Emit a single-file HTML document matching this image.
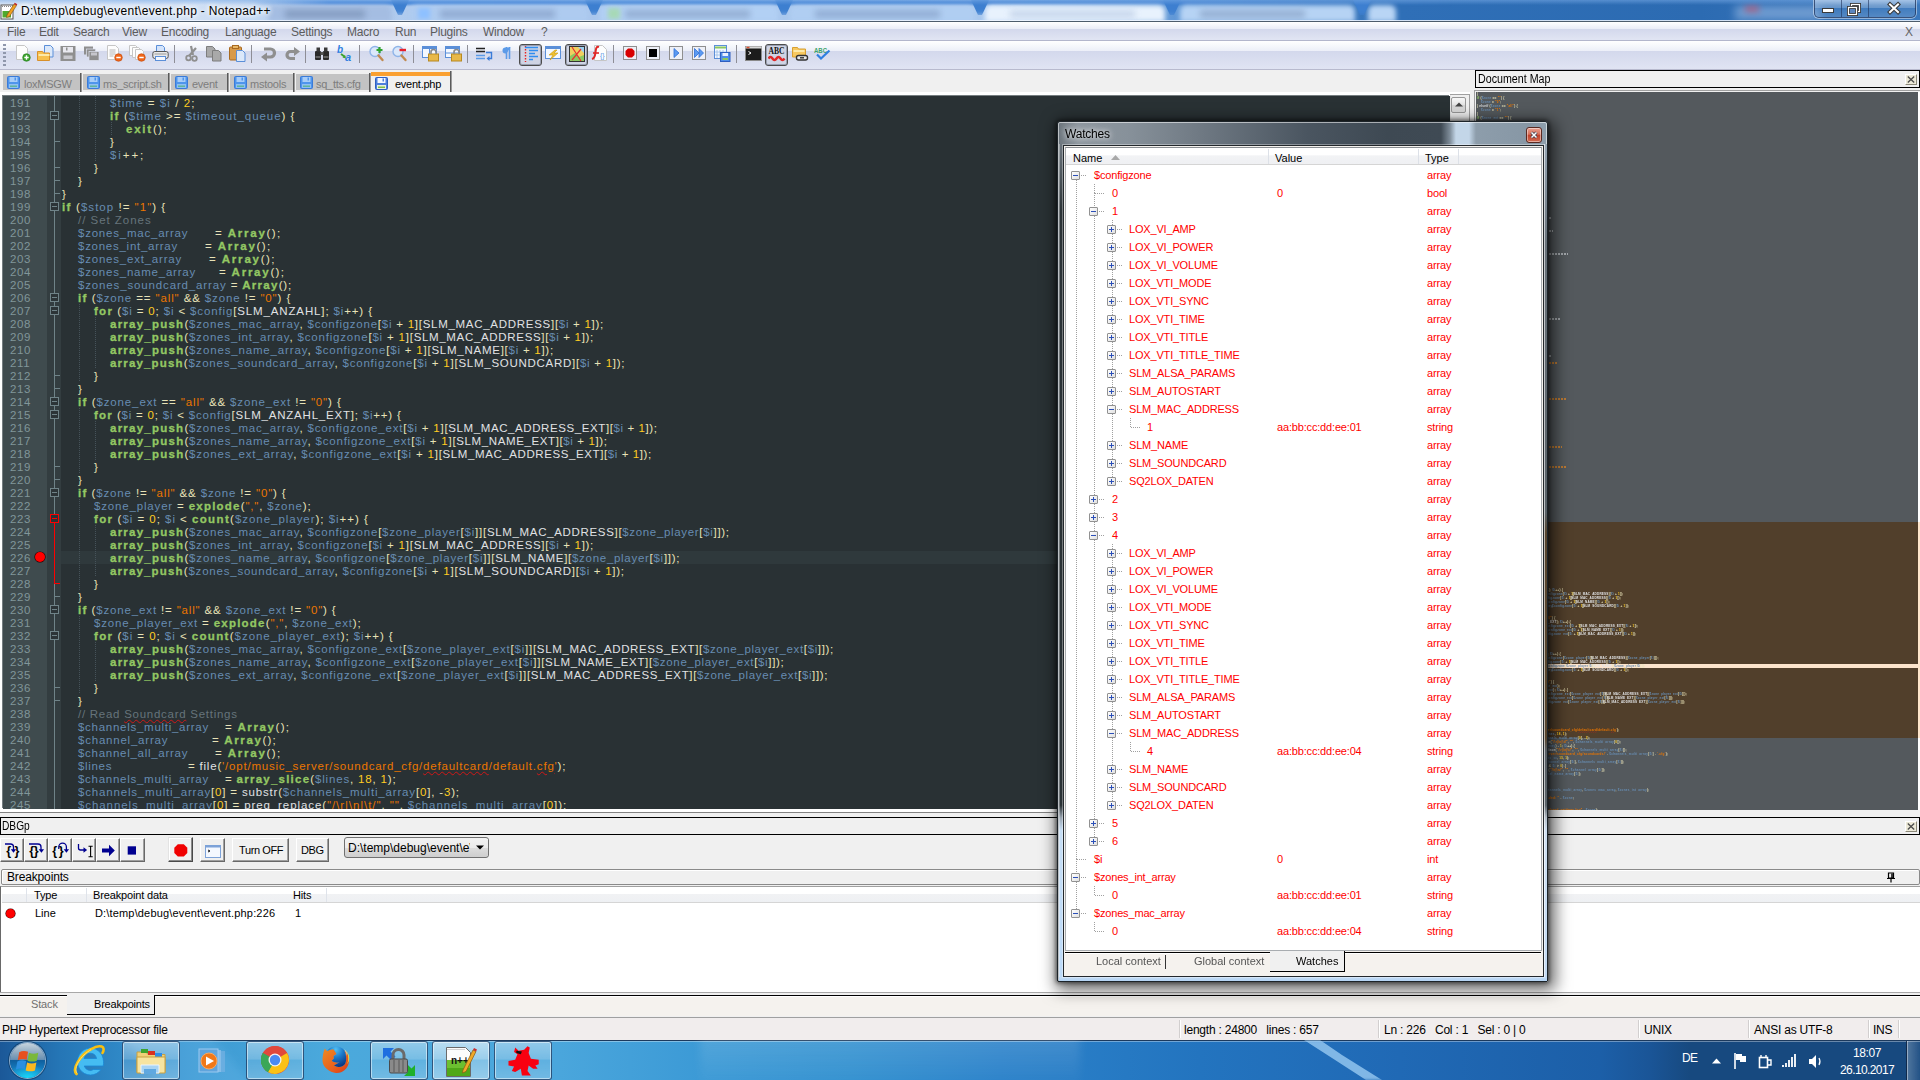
<!DOCTYPE html>
<html><head><meta charset="utf-8"><title>Notepad++</title>
<style>

*{box-sizing:border-box;margin:0;padding:0}
html,body{width:1920px;height:1080px;overflow:hidden;background:#f0f0f0}
body{font-family:"Liberation Sans",sans-serif;font-size:11px;color:#000}
#root{position:relative;width:1920px;height:1080px;overflow:hidden;background:#f0f0f0}
.abs{position:absolute}
.t{position:absolute;white-space:pre;line-height:1}

/* ---------- title bar ---------- */
#title{position:absolute;left:0;top:0;width:1920px;height:21px;overflow:hidden;
 background:linear-gradient(90deg,#dde8f7 0,#cfdff4 200px,#b5cff0 300px,#a9c6ec 560px,#a9c8ee 980px,#5f97d6 1180px,#2f6fb7 1400px,#2c6bb2 1700px,#3a78bd 1920px)}
#title .bl{position:absolute;filter:blur(2px)}
#title .ttl{position:absolute;left:21px;top:3px;font-size:12px;line-height:16px;color:#000;white-space:pre;letter-spacing:.3px;
 text-shadow:0 0 6px #fff,0 0 6px #fff,0 0 4px #fff}

/* ---------- menu ---------- */
#menu{position:absolute;left:0;top:22px;width:1920px;height:19px;border-bottom:1px solid #b3b6cc;
 background:linear-gradient(180deg,#ffffff 0,#e9ecf7 7px,#d3d8ec 7px,#e1e5f3 18px)}
#menu span{position:absolute;top:3px;font-size:12px;line-height:14px;color:#5c5c5c;white-space:pre;letter-spacing:-.25px}

/* ---------- toolbar ---------- */
#tbar{position:absolute;left:0;top:41px;width:1920px;height:29px;
 background:linear-gradient(180deg,#ffffff 0,#eceff8 10px,#d3d8ec 10px,#e0e4f3 28px)}
#tbar .sep{position:absolute;top:4px;width:1px;height:18px;background:#8e8e96}
#tbar svg{position:absolute}

/* ---------- tabs ---------- */
#tabs{position:absolute;left:0;top:70px;width:1470px;height:24px;background:#f0f0f0}
.tab{position:absolute;top:4px;height:16px;background:#c3c3c3;color:#7d7d7d;font-size:11px}
.tab b{position:absolute;font-weight:normal;top:4px;white-space:pre;line-height:12px;letter-spacing:-.25px}
.tabsep{position:absolute;top:3px;width:2px;height:19px;background:linear-gradient(90deg,#5a5a5a 0 1px,#9a9a9a 1px 2px)}
.tab.act{top:2px;height:21px;background:#f0f0f0;color:#000;border-top:4px solid #faa030}

/* ---------- editor ---------- */
#ed{position:absolute;left:0;top:93px;width:1470px;height:720px;background:#fff;border-bottom:1px solid #828282}
#edin{position:absolute;left:3px;top:3px;width:1447px;height:713px;background:#293134;overflow:hidden;box-shadow:-1px -1px 0 #757d80}
#lnm{position:absolute;left:0;top:0;width:44px;height:715px;background:#3f4b4e}
#fold{position:absolute;left:44px;top:0;width:14px;height:715px;background:#333d40}
.ln{position:absolute;left:7px;color:#81969a;font-size:11.5px;line-height:13px;letter-spacing:.6px;white-space:pre}
.cl{position:absolute;white-space:pre;font-size:11.5px;line-height:13px;color:#e0e2e4;height:13px;letter-spacing:var(--ls)}
.cl i{font-style:normal}
.v{color:#678cb1}.k{color:#93c763;font-weight:bold;letter-spacing:calc(var(--ls) + .4px);-webkit-text-stroke:.3px #93c763}.s{color:#ec7600}.n{color:#ffcd22}.o{color:#e8e2b7}.c{color:#66747b}.d{color:#e0e2e4}
.sq{text-decoration:underline wavy #d01818 1px;text-underline-offset:1px}

/* ---------- generic win classic ---------- */
.cap{position:absolute;background:#f0f0f0;border:1px solid #000;font-size:12px;line-height:14px;white-space:pre}
.xbtn{position:absolute;width:12px;height:11px;border:1px solid;border-color:#fff #8a8778 #8a8778 #fff;background:#ece9d8}
.btn{position:absolute;background:#f0f0f0;border:1px solid;border-color:#fff #696969 #696969 #fff;box-shadow:inset -1px -1px 0 #a0a0a0}

.tr{color:#f00;font-size:11px;letter-spacing:-.17px}
.mm{opacity:1;font-weight:bold}

.capt{display:inline-block;transform:scaleX(.89);transform-origin:0 50%;font-size:12px}
</style></head>
<body>
<div id="root">
<div id="title">
<div class="abs" style="left:250px;top:0;width:1200px;height:5px;background:linear-gradient(90deg,rgba(62,126,205,0),#4486da 80px,#3f80d2 900px,#2f6fb7);filter:blur(1.200px)"></div><div class="bl" style="left:268px;top:5px;width:124px;height:17px;background:#a4bde2;border-radius:6px 6px 0 0;filter:blur(2.500px)"></div><div class="bl" style="left:410px;top:5px;width:178px;height:17px;background:#aecbf0;border-radius:6px 6px 0 0;filter:blur(2.500px)"></div><div class="bl" style="left:600px;top:5px;width:178px;height:17px;background:#b2d0f4;border-radius:6px 6px 0 0;filter:blur(2.500px)"></div><div class="bl" style="left:790px;top:5px;width:185px;height:17px;background:#b0cef2;border-radius:6px 6px 0 0;filter:blur(2.500px)"></div><div class="bl" style="left:985px;top:5px;width:180px;height:17px;background:#e8f2fd;border-radius:6px 6px 0 0;filter:blur(2.500px)"></div><div class="bl" style="left:1180px;top:5px;width:175px;height:17px;background:#b6d3f4;border-radius:6px 6px 0 0;filter:blur(2.500px)"></div><div class="bl" style="left:1368px;top:5px;width:28px;height:17px;background:#b9d5f5;border-radius:6px 6px 0 0;filter:blur(2.500px)"></div><div class="bl" style="left:390px;top:-2px;width:20px;height:17px;background:#3d7fd0;clip-path:polygon(0 0,100% 0,60% 100%,40% 100%);filter:blur(2.500px)"></div><div class="bl" style="left:584px;top:-2px;width:20px;height:17px;background:#3d7fd0;clip-path:polygon(0 0,100% 0,60% 100%,40% 100%);filter:blur(2.500px)"></div><div class="bl" style="left:774px;top:-2px;width:20px;height:17px;background:#3d7fd0;clip-path:polygon(0 0,100% 0,60% 100%,40% 100%);filter:blur(2.500px)"></div><div class="bl" style="left:970px;top:-2px;width:20px;height:17px;background:#3d7fd0;clip-path:polygon(0 0,100% 0,60% 100%,40% 100%);filter:blur(2.500px)"></div><div class="bl" style="left:1162px;top:-2px;width:20px;height:17px;background:#3d7fd0;clip-path:polygon(0 0,100% 0,60% 100%,40% 100%);filter:blur(2.500px)"></div><div class="bl" style="left:1352px;top:-2px;width:20px;height:17px;background:#3d7fd0;clip-path:polygon(0 0,100% 0,60% 100%,40% 100%);filter:blur(2.500px)"></div><div class="bl" style="left:285px;top:10px;width:80px;height:8px;background:#7f97bb;filter:blur(3px);opacity:.85"></div><div class="bl" style="left:440px;top:10px;width:115px;height:8px;background:#8aa4cb;filter:blur(3px);opacity:.85"></div><div class="bl" style="left:625px;top:10px;width:125px;height:8px;background:#8ea8cd;filter:blur(3px);opacity:.85"></div><div class="bl" style="left:815px;top:10px;width:125px;height:8px;background:#8da8cf;filter:blur(3px);opacity:.85"></div><div class="bl" style="left:1010px;top:10px;width:125px;height:8px;background:#c3d3ea;filter:blur(3px);opacity:.85"></div><div class="bl" style="left:1200px;top:10px;width:105px;height:8px;background:#8fa9cd;filter:blur(3px);opacity:.85"></div><div class="bl" style="left:418px;top:8px;width:12px;height:11px;background:#8ec0ff;filter:blur(2px)"></div><div class="bl" style="left:608px;top:8px;width:12px;height:11px;background:#a7d9b6;filter:blur(2px)"></div><div class="bl" style="left:1735px;top:6px;width:85px;height:14px;background:#7fa7d8;filter:blur(4px);opacity:.8"></div><div class="bl" style="left:1745px;top:6px;width:14px;height:6px;background:#c0506a;filter:blur(3px);opacity:.7"></div><div class="abs" style="left:0;top:0;width:1920px;height:5px;background:linear-gradient(180deg,rgba(120,170,230,.55),rgba(120,170,230,0))"></div><svg class="abs" style="left:0;top:2px" width="18" height="18" viewBox="0 0 18 18"><rect x="1" y="3" width="12" height="14" fill="#fff" stroke="#555" stroke-width="1"/><rect x="2.5" y="9" width="8.5" height="6.5" fill="#4ea92c"/><path d="M2 4.5h10" stroke="#888" stroke-width="1" stroke-dasharray="1 1"/><path d="M7 13 L14 2 L16.5 3.5 L9.5 14.5 L6.5 15.5Z" fill="#f0a020" stroke="#7a4a10" stroke-width=".6"/><path d="M14 2 L16.5 3.5 L17.3 2.2 L14.8 .8Z" fill="#c02020"/></svg><span class="ttl">D:\temp\debug\event\event.php - Notepad++</span><div class="abs" style="left:1814px;top:0;width:102px;height:18px;border:1px solid rgba(30,50,90,.75);border-top:none;border-radius:0 0 5px 5px;box-shadow:0 0 0 1px rgba(255,255,255,.45);background:linear-gradient(180deg,rgba(255,255,255,.45) 0,rgba(255,255,255,.25) 45%,rgba(255,255,255,.05) 50%,rgba(255,255,255,.15) 100%)"></div><div class="abs" style="left:1841px;top:0;width:1px;height:17px;background:rgba(30,50,90,.6)"></div><div class="abs" style="left:1868px;top:0;width:1px;height:17px;background:rgba(30,50,90,.6)"></div><svg class="abs" style="left:1814px;top:0" width="102" height="18"><rect x="8.5" y="8.5" width="11" height="4" fill="#fff" stroke="#3a3a3a"/><rect x="37.500" y="4.5" width="8" height="7" fill="none" stroke="#3a3a3a" stroke-width="3"/><rect x="37.500" y="4.5" width="8" height="7" fill="none" stroke="#fff" stroke-width="1.2"/><rect x="34.500" y="7.500" width="8" height="7" fill="#5b86bf" stroke="#3a3a3a" stroke-width="3"/><rect x="34.500" y="7.500" width="8" height="7" fill="none" stroke="#fff" stroke-width="1.2"/><path d="M76 4.500 L84 12 M84 4.500 L76 12" stroke="#3a3a3a" stroke-width="4.200" stroke-linecap="square"/><path d="M76 4.500 L84 12 M84 4.500 L76 12" stroke="#fff" stroke-width="2" stroke-linecap="square"/></svg></div>
<div class="abs" style="left:0;top:20px;width:1920px;height:1px;background:rgba(240,246,255,.85)"></div><div class="abs" style="left:0;top:21px;width:1920px;height:1px;background:#4d5c6c"></div>
<div id="menu"><span style="left:7px">File</span><span style="left:39px">Edit</span><span style="left:73px">Search</span><span style="left:122px">View</span><span style="left:161px">Encoding</span><span style="left:225px">Language</span><span style="left:291px">Settings</span><span style="left:347px">Macro</span><span style="left:395px">Run</span><span style="left:430px">Plugins</span><span style="left:483px">Window</span><span style="left:541px">?</span><span style="left:1905px;color:#666">X</span></div>
<div id="tbar"><div class="abs" style="left:0;top:28px;width:1920px;height:1px;background:#b8bace"></div><div class="abs" style="left:3px;top:3px;width:3px;height:22px;background:repeating-linear-gradient(180deg,#8f97ab 0 2px,transparent 2px 4px)"></div><div class="sep" style="left:174px"></div><div class="sep" style="left:251px"></div><div class="sep" style="left:305px"></div><div class="sep" style="left:359px"></div><div class="sep" style="left:413px"></div><div class="sep" style="left:467px"></div><div class="sep" style="left:613px"></div><div class="sep" style="left:736px"></div><svg class="abs" style="left:15px;top:4px" width="16" height="17" viewBox="0 0 16 17"><path d="M1.500 .5h8l3 3v11h-11z" fill="#fdfdfd" stroke="#c6c6c6"/><circle cx="11.500" cy="12.500" r="3.800" fill="#3da32e" stroke="#1f7a18" stroke-width=".6"/><path d="M11.500 10.300v4.400M9.300 12.500h4.400" stroke="#fff" stroke-width="1.400"/></svg><svg class="abs" style="left:37px;top:4px" width="17" height="17" viewBox="0 0 17 17"><path d="M7.500 .5h6l2.500 2.500v9h-8.500z" fill="#dbe8fa" stroke="#5b8fd8"/><path d="M.5 6.500h5l1 1.500h6v7.500h-12z" fill="#f7c04e" stroke="#d8902a"/><path d="M1.500 10h11" stroke="#fde9a8" stroke-width="2"/></svg><svg class="abs" style="left:60px;top:4px" width="16" height="17" viewBox="0 0 16 17"><rect x=".5" y="1" width="15" height="15" fill="#8f8f8f"/><rect x="3" y="2" width="10" height="5.500" fill="#e9e9ef"/><rect x="6" y="2.500" width="1.500" height="3" fill="#8f8f8f"/><rect x="3.500" y="10.500" width="9" height="3.500" fill="#c9c9cf"/></svg><svg class="abs" style="left:84px;top:4px" width="16" height="17" viewBox="0 0 16 17"><rect x="0" y="1.500" width="9" height="8" fill="#8f8f8f"/><rect x="2.500" y="4" width="9" height="8" fill="#8f8f8f" stroke="#dfe3f0" stroke-width=".7"/><rect x="5" y="6.500" width="10" height="9" fill="#8f8f8f" stroke="#dfe3f0" stroke-width=".7"/><rect x="7" y="7.500" width="6" height="3" fill="#c6c6cc"/></svg><svg class="abs" style="left:107px;top:4px" width="16" height="17" viewBox="0 0 16 17"><path d="M.5 .5h8l3 3v11h-11z" fill="#fdfdfd" stroke="#c6c6c6"/><path d="M2.500 5h6M2.500 7h6M2.500 9h6M2.500 11h4" stroke="#b5b5b5"/><circle cx="11.500" cy="12.500" r="3.800" fill="#f0661a" stroke="#c04608" stroke-width=".6"/><path d="M9.300 12.500h4.400" stroke="#fff" stroke-width="1.500"/></svg><svg class="abs" style="left:129px;top:4px" width="17" height="17" viewBox="0 0 17 17"><path d="M.5 .5h6l2 2v8h-8z" fill="#fdfdfd" stroke="#c6c6c6"/><path d="M3.500 2.500h6l2 2v8h-8z" fill="#fdfdfd" stroke="#c6c6c6"/><path d="M6.500 4.500h6l2 2v8h-8z" fill="#fdfdfd" stroke="#c6c6c6"/><circle cx="12.500" cy="12.500" r="3.800" fill="#f0661a" stroke="#c04608" stroke-width=".6"/><path d="M10.300 12.500h4.400" stroke="#fff" stroke-width="1.500"/></svg><svg class="abs" style="left:152px;top:4px" width="17" height="17" viewBox="0 0 17 17"><path d="M4.500 .5h6l2 2v5h-8z" fill="#d4e4fb" stroke="#5b8fd8"/><rect x=".8" y="6.500" width="15.400" height="7" rx="2" fill="#e8e8e8" stroke="#555"/><rect x="3.500" y="11.500" width="10" height="4" fill="#f4f8ff" stroke="#5b8fd8"/><path d="M2.500 9h12" stroke="#9a9a9a"/></svg><svg class="abs" style="left:185px;top:4px" width="14" height="17" viewBox="0 0 14 17"><path d="M6 1 L8 10 M11 3 L4 11" stroke="#8f8f8f" stroke-width="2.200"/><circle cx="3.500" cy="13" r="2.300" fill="none" stroke="#8f8f8f" stroke-width="1.800"/><circle cx="9.500" cy="13.500" r="2.300" fill="none" stroke="#8f8f8f" stroke-width="1.800"/></svg><svg class="abs" style="left:206px;top:4px" width="17" height="17" viewBox="0 0 17 17"><path d="M.5 1.500h6l2.500 2.500v8h-8.500z" fill="#a9a9a9" stroke="#7d7d7d"/><path d="M6.500 5.500h6l2.500 2.500v8h-8.500z" fill="#a9a9a9" stroke="#7d7d7d"/></svg><svg class="abs" style="left:229px;top:4px" width="17" height="17" viewBox="0 0 17 17"><rect x=".5" y="2" width="12" height="13" rx="1" fill="#d89a4a" stroke="#a86a20"/><rect x="3.500" y=".5" width="6" height="3" fill="#e8b868" stroke="#a86a20"/><path d="M7.500 5.500h6l2.500 2.500v8.500h-8.500z" fill="#dbe8fa" stroke="#5b8fd8"/></svg><svg class="abs" style="left:261px;top:4px" width="16" height="17" viewBox="0 0 16 17"><path d="M3 4h6.500a4 4 0 0 1 0 8H6" fill="none" stroke="#8f8f8f" stroke-width="3.200"/><path d="M0 12l6-4.500v9z" fill="#8f8f8f"/></svg><svg class="abs" style="left:284px;top:4px" width="16" height="17" viewBox="0 0 16 17"><path d="M11 6.500H6.500a3.500 3.500 0 0 0 0 7H11" fill="none" stroke="#8f8f8f" stroke-width="3.200"/><path d="M16 6.500l-6-4.500v9z" fill="#8f8f8f"/></svg><svg class="abs" style="left:314px;top:4px" width="16" height="17" viewBox="0 0 16 17"><rect x="1" y="6" width="6" height="9" rx="1" fill="#2a2a2a"/><rect x="9" y="6" width="6" height="9" rx="1" fill="#2a2a2a"/><rect x="2.500" y="2.500" width="3.500" height="4" fill="#3a3a3a"/><rect x="10" y="2.500" width="3.500" height="4" fill="#3a3a3a"/><rect x="6.500" y="7" width="3" height="3" fill="#555"/><path d="M1.500 12h5M9.500 12h5" stroke="#9a9a9a"/></svg><svg class="abs" style="left:337px;top:4px" width="17" height="18" viewBox="0 0 17 18"><text x="0" y="8" font-family="Liberation Sans" font-size="10" font-weight="bold" font-style="italic" fill="#2f7fe0">b</text><text x="8" y="16" font-family="Liberation Sans" font-size="11" font-weight="bold" font-style="italic" fill="#2f7fe0">a</text><path d="M4 9l4 3" stroke="#3da32e" stroke-width="1.800"/><path d="M9 13.500l-1-3.500l-2.500 2.500z" fill="#3da32e"/></svg><svg class="abs" style="left:369px;top:4px" width="16" height="17" viewBox="0 0 16 17"><circle cx="6" cy="6.500" r="5" fill="#dbe8fa" stroke="#8fb4e8" stroke-width="1.400"/><path d="M9.500 10.500l4 4.500" stroke="#c08a50" stroke-width="2.400" stroke-linecap="round"/><path d="M10.500 2v6M7.500 5h6" stroke="#2fa32e" stroke-width="2.200"/></svg><svg class="abs" style="left:392px;top:4px" width="16" height="17" viewBox="0 0 16 17"><circle cx="6" cy="6.500" r="5" fill="#dbe8fa" stroke="#8fb4e8" stroke-width="1.400"/><path d="M9.500 10.500l4 4.500" stroke="#c08a50" stroke-width="2.400" stroke-linecap="round"/><path d="M7.500 5h6.500" stroke="#e8202a" stroke-width="2.400"/></svg><svg class="abs" style="left:422px;top:4px" width="17" height="17" viewBox="0 0 17 17"><rect x=".5" y="1.500" width="14" height="11" fill="#f4f8ff" stroke="#5b8fd8"/><path d="M.5 3h14" stroke="#5b8fd8" stroke-width="2"/><path d="M7.500 3v9.500" stroke="#5b8fd8"/><rect x="6.500" y="9" width="10" height="7" fill="#e8b848" stroke="#b88a20"/><path d="M9 9v-2a2.500 2.500 0 0 1 5 0v2" fill="none" stroke="#8a8a8a" stroke-width="1.600"/></svg><svg class="abs" style="left:445px;top:4px" width="17" height="17" viewBox="0 0 17 17"><rect x=".5" y="1.500" width="14" height="11" fill="#f4f8ff" stroke="#5b8fd8"/><path d="M.5 3h14" stroke="#5b8fd8" stroke-width="2"/><path d="M.5 8h14" stroke="#5b8fd8"/><rect x="6.500" y="9" width="10" height="7" fill="#e8b848" stroke="#b88a20"/><path d="M9 9v-2a2.500 2.500 0 0 1 5 0v2" fill="none" stroke="#8a8a8a" stroke-width="1.600"/></svg><svg class="abs" style="left:476px;top:4px" width="17" height="17" viewBox="0 0 17 17"><path d="M0 3.500h9M0 6.500h9" stroke="#222" stroke-width="1.400"/><path d="M0 10.500h9M0 13.500h9" stroke="#5b9ae8" stroke-width="1.400"/><path d="M10 7.500h5.500v6h-3" fill="none" stroke="#3a7bd8" stroke-width="1.400"/><path d="M13.500 11l-3 2.500l3 2.500z" fill="#3a7bd8"/></svg><svg class="abs" style="left:501px;top:4px" width="10" height="17" viewBox="0 0 10 17"><path d="M5.500 2v12M8.500 2v12" stroke="#5b9ae8" stroke-width="1.600"/><path d="M9.500 2.500H4.500a3 3 0 0 0 0 6h1z" fill="#5b9ae8"/></svg><div class="abs" style="left:519px;top:3px;width:23px;height:22px;border:1px solid #4c4c4c;border-radius:3px;background:#cfd4e4;box-shadow:inset 0 0 0 1px #9aa0b2"></div><svg class="abs" style="left:524px;top:5px" width="16" height="16" viewBox="0 0 16 16"><path d="M1.500 0v16" stroke="#e82020" stroke-width="1.400" stroke-dasharray="1.500 1.500"/><path d="M1 1.500h13M5 4.500h9M5 7.500h6M5 10.500h9M5 13.500h4" stroke="#2f8df0" stroke-width="1.600"/></svg><svg class="abs" style="left:545px;top:4px" width="16" height="17" viewBox="0 0 16 17"><rect x=".5" y="1.500" width="15" height="12" fill="#f4f8ff" stroke="#5b8fd8"/><path d="M.5 3h15" stroke="#5b8fd8" stroke-width="2"/><path d="M10 5l-6 5h4l-3 5l8-7h-4l3-3z" fill="#f0c030" stroke="#c89a18" stroke-width=".6"/></svg><div class="abs" style="left:565px;top:3px;width:23px;height:22px;border:1px solid #4c4c4c;border-radius:3px;background:#cfd4e4;box-shadow:inset 0 0 0 1px #9aa0b2"></div><svg class="abs" style="left:569px;top:5px" width="16" height="16" viewBox="0 0 16 16"><rect x=".5" y=".5" width="15" height="15" fill="#f0d060" stroke="#333"/><path d="M1 10l5-3l4 4l5-2v6h-14z" fill="#8cc860"/><path d="M9 1h6v6z" fill="#9ad0f0"/><path d="M3 1l9 14M12 3l-9 11" stroke="#e83030" stroke-width="1.200"/></svg><svg class="abs" style="left:591px;top:4px" width="17" height="18" viewBox="0 0 17 18"><path d="M3.500 .5h8l4 4v11h-12z" fill="#fdfdfd" stroke="#c6c6c6"/><path d="M8 2c-3-1-3 2-3.500 5s0 6-3.500 7" fill="none" stroke="#e02828" stroke-width="2"/><path d="M2 8h6" stroke="#e02828" stroke-width="1.600"/><text x="9" y="13" font-family="Liberation Sans" font-size="7" fill="#5b9ae8">{}</text></svg><svg class="abs" style="left:623px;top:5px" width="14" height="14" viewBox="0 0 14 14"><rect x=".5" y=".5" width="13" height="13" fill="#eef0f7" stroke="#8f8f8f"/><path d="M5 2.500h4l2.500 2.500v4L9 11.500H5L2.500 9V5z" fill="#d80000"/></svg><svg class="abs" style="left:646px;top:5px" width="14" height="14" viewBox="0 0 14 14"><rect x=".5" y=".5" width="13" height="13" fill="#eef0f7" stroke="#8f8f8f"/><rect x="3" y="3" width="8" height="8" fill="#000"/></svg><svg class="abs" style="left:669px;top:5px" width="14" height="14" viewBox="0 0 14 14"><rect x=".5" y=".5" width="13" height="13" fill="#eef0f7" stroke="#8f8f8f"/><path d="M5 2.500l5 4.500l-5 4.500z" fill="#5b9af0" stroke="#2f6fd8" stroke-width=".8"/></svg><svg class="abs" style="left:692px;top:5px" width="14" height="14" viewBox="0 0 14 14"><rect x=".5" y=".5" width="13" height="13" fill="#eef0f7" stroke="#8f8f8f"/><path d="M2.500 2.500l4.500 4.500l-4.500 4.500z M7 2.500l4.500 4.500l-4.500 4.500z" fill="#5b9af0" stroke="#2f6fd8" stroke-width=".8"/></svg><svg class="abs" style="left:714px;top:4px" width="17" height="17" viewBox="0 0 17 17"><rect x=".5" y=".5" width="12" height="13" fill="#f4f8ff" stroke="#5b8fd8"/><path d="M1 2.500h11" stroke="#8cc860" stroke-width="2"/><path d="M3 5v8M6 5v8M9 5v8M1 7h11M1 10h11" stroke="#9abce8" stroke-width=".8"/><rect x="6.500" y="7.500" width="9.500" height="9" fill="#4f8fe8" stroke="#2f5fc0"/><rect x="8.500" y="8" width="5.500" height="3" fill="#e8f0ff"/><rect x="8.500" y="13" width="5.500" height="2" fill="#8cc860"/></svg><svg class="abs" style="left:745px;top:5px" width="17" height="15" viewBox="0 0 17 15"><rect x=".5" y=".5" width="16" height="14" fill="#1c1c1c" stroke="#8a8a8a"/><path d="M.5 1.500h16" stroke="#d8d8d8" stroke-width="2"/><path d="M1.500 1.500h3" stroke="#e05030" stroke-width="1.400"/><path d="M3.500 5.500l2.500 1.500l-2.500 1.500" fill="none" stroke="#fff" stroke-width="1"/></svg><div class="abs" style="left:765px;top:3px;width:23px;height:22px;border:1px solid #4c4c4c;border-radius:3px;background:#cfd4e4;box-shadow:inset 0 0 0 1px #9aa0b2"></div><svg class="abs" style="left:768px;top:5px" width="18" height="16" viewBox="0 0 18 16"><text x=".5" y="8" font-family="Liberation Serif" font-size="9.500" font-weight="bold" fill="#111" textLength="16" lengthAdjust="spacingAndGlyphs">ABC</text><path d="M.5 12.500q2-3 4 0t4 0t4 0t4 0" fill="none" stroke="#e02828" stroke-width="2.400"/></svg><svg class="abs" style="left:792px;top:4px" width="17" height="17" viewBox="0 0 17 17"><path d="M.5 2.500h5l1 1.500h7v8h-13z" fill="#f7c860" stroke="#d8a030"/><path d="M1.500 6h11" stroke="#fde9a8" stroke-width="2"/><rect x="4.500" y="10.500" width="11" height="4.500" rx="2" fill="#e8e8e8" stroke="#333" stroke-width="1.400"/><path d="M8 12.800h4" stroke="#333" stroke-width="1.400"/></svg><svg class="abs" style="left:814px;top:4px" width="17" height="17" viewBox="0 0 17 17"><text x="0" y="7.500" font-family="Liberation Sans" font-size="8" font-weight="bold" fill="#3da36a" textLength="13" lengthAdjust="spacingAndGlyphs">ABC</text><path d="M3 9.500l4 4l8.500-8" fill="none" stroke="#2f7fe0" stroke-width="2.200"/></svg></div>
<div id="tabs"><div class="tab" style="left:3px;width:77px"><svg class="abs" style="left:4px;top:2px" width="13" height="13" viewBox="0 0 13 13"><rect x=".5" y=".5" width="12" height="12" rx="1" fill="#4f95ec" stroke="#3a7bd8"/><rect x="2.500" y="1" width="8" height="5" fill="#a8cdf8"/><rect x="7.500" y="1.500" width="1.500" height="3" fill="#4f95ec"/><rect x="2" y="8" width="9" height="4" fill="#8fc0f2"/><rect x="3" y="9.500" width="7" height="1.500" fill="#5fb49a"/></svg><b style="left:21px">loxMSGW</b></div><div class="tabsep" style="left:80px"></div><div class="tab" style="left:83px;width:85px"><svg class="abs" style="left:4px;top:2px" width="13" height="13" viewBox="0 0 13 13"><rect x=".5" y=".5" width="12" height="12" rx="1" fill="#4f95ec" stroke="#3a7bd8"/><rect x="2.500" y="1" width="8" height="5" fill="#a8cdf8"/><rect x="7.500" y="1.500" width="1.500" height="3" fill="#4f95ec"/><rect x="2" y="8" width="9" height="4" fill="#8fc0f2"/><rect x="3" y="9.500" width="7" height="1.500" fill="#5fb49a"/></svg><b style="left:20px">ms_script.sh</b></div><div class="tabsep" style="left:168px"></div><div class="tab" style="left:171px;width:56px"><svg class="abs" style="left:4px;top:2px" width="13" height="13" viewBox="0 0 13 13"><rect x=".5" y=".5" width="12" height="12" rx="1" fill="#4f95ec" stroke="#3a7bd8"/><rect x="2.500" y="1" width="8" height="5" fill="#a8cdf8"/><rect x="7.500" y="1.500" width="1.500" height="3" fill="#4f95ec"/><rect x="2" y="8" width="9" height="4" fill="#8fc0f2"/><rect x="3" y="9.500" width="7" height="1.500" fill="#5fb49a"/></svg><b style="left:21px">event</b></div><div class="tabsep" style="left:227px"></div><div class="tab" style="left:230px;width:63px"><svg class="abs" style="left:4px;top:2px" width="13" height="13" viewBox="0 0 13 13"><rect x=".5" y=".5" width="12" height="12" rx="1" fill="#4f95ec" stroke="#3a7bd8"/><rect x="2.500" y="1" width="8" height="5" fill="#a8cdf8"/><rect x="7.500" y="1.500" width="1.500" height="3" fill="#4f95ec"/><rect x="2" y="8" width="9" height="4" fill="#8fc0f2"/><rect x="3" y="9.500" width="7" height="1.500" fill="#5fb49a"/></svg><b style="left:20px">mstools</b></div><div class="tabsep" style="left:293px"></div><div class="tab" style="left:296px;width:73px"><svg class="abs" style="left:4px;top:2px" width="13" height="13" viewBox="0 0 13 13"><rect x=".5" y=".5" width="12" height="12" rx="1" fill="#4f95ec" stroke="#3a7bd8"/><rect x="2.500" y="1" width="8" height="5" fill="#a8cdf8"/><rect x="7.500" y="1.500" width="1.500" height="3" fill="#4f95ec"/><rect x="2" y="8" width="9" height="4" fill="#8fc0f2"/><rect x="3" y="9.500" width="7" height="1.500" fill="#5fb49a"/></svg><b style="left:20px">sq_tts.cfg</b></div><div class="tabsep" style="left:369px"></div><div class="tab act" style="left:371px;width:79px"><svg class="abs" style="left:4px;top:1px" width="13" height="13" viewBox="0 0 13 13"><rect x=".5" y=".5" width="12" height="12" rx="1" fill="#4d7fdc" stroke="#2f5fc0"/><rect x="2.500" y="1" width="8" height="5" fill="#f4f8ff"/><rect x="7.500" y="1.500" width="1.500" height="3" fill="#4d7fdc"/><rect x="2" y="8" width="9" height="4" fill="#e8f0e0"/><rect x="3" y="9.500" width="7" height="1.500" fill="#7cc04a"/></svg><b style="left:24px;top:2px">event.php</b></div><div class="tabsep" style="left:450px;top:1px;height:21px"></div><div class="abs" style="left:0;top:22px;width:1470px;height:1px;background:#fff"></div></div>
<div class="cap" style="left:1475px;top:70px;width:445px;height:18px;padding:1px 0 0 2px"><span class="capt">Document Map</span></div><div class="xbtn" style="left:1905px;top:74px"></div><svg class="abs" style="left:1907px;top:76px" width="8" height="7"><path d="M.8 .5 L7.200 6.500 M7.200 .5 L.8 6.500" stroke="#4a4a4a" stroke-width="1.300"/></svg><div id="ed"><div id="edin">
<div id="lnm"></div><div id="fold"></div>
<div class="abs" style="left:58px;top:455px;width:1390px;height:13px;background:#2f393c"></div>
<div class="abs" style="left:76px;top:0px;width:1px;height:78px;background:repeating-linear-gradient(180deg,#46535a 0 1px,transparent 1px 2px)"></div>
<div class="abs" style="left:76px;top:208px;width:1px;height:78px;background:repeating-linear-gradient(180deg,#46535a 0 1px,transparent 1px 2px)"></div>
<div class="abs" style="left:76px;top:312px;width:1px;height:65px;background:repeating-linear-gradient(180deg,#46535a 0 1px,transparent 1px 2px)"></div>
<div class="abs" style="left:76px;top:403px;width:1px;height:91px;background:repeating-linear-gradient(180deg,#46535a 0 1px,transparent 1px 2px)"></div>
<div class="abs" style="left:76px;top:520px;width:1px;height:78px;background:repeating-linear-gradient(180deg,#46535a 0 1px,transparent 1px 2px)"></div>
<div class="abs" style="left:92px;top:0px;width:1px;height:65px;background:repeating-linear-gradient(180deg,#46535a 0 1px,transparent 1px 2px)"></div>
<div class="abs" style="left:92px;top:221px;width:1px;height:52px;background:repeating-linear-gradient(180deg,#46535a 0 1px,transparent 1px 2px)"></div>
<div class="abs" style="left:92px;top:325px;width:1px;height:39px;background:repeating-linear-gradient(180deg,#46535a 0 1px,transparent 1px 2px)"></div>
<div class="abs" style="left:92px;top:429px;width:1px;height:52px;background:repeating-linear-gradient(180deg,#46535a 0 1px,transparent 1px 2px)"></div>
<div class="abs" style="left:92px;top:546px;width:1px;height:39px;background:repeating-linear-gradient(180deg,#46535a 0 1px,transparent 1px 2px)"></div>
<div class="abs" style="left:108px;top:26px;width:1px;height:13px;background:repeating-linear-gradient(180deg,#46535a 0 1px,transparent 1px 2px)"></div>
<div class="abs" style="left:51px;top:0px;width:1px;height:715px;background:#6f8388"></div><div class="abs" style="left:51px;top:45px;width:6px;height:1px;background:#6f8388"></div><div class="abs" style="left:51px;top:71px;width:6px;height:1px;background:#6f8388"></div><div class="abs" style="left:51px;top:84px;width:6px;height:1px;background:#6f8388"></div><div class="abs" style="left:51px;top:97px;width:6px;height:1px;background:#6f8388"></div><div class="abs" style="left:51px;top:279px;width:6px;height:1px;background:#6f8388"></div><div class="abs" style="left:51px;top:292px;width:6px;height:1px;background:#6f8388"></div><div class="abs" style="left:51px;top:370px;width:6px;height:1px;background:#6f8388"></div><div class="abs" style="left:51px;top:383px;width:6px;height:1px;background:#6f8388"></div><div class="abs" style="left:51px;top:500px;width:6px;height:1px;background:#6f8388"></div><div class="abs" style="left:51px;top:591px;width:6px;height:1px;background:#6f8388"></div><div class="abs" style="left:51px;top:604px;width:6px;height:1px;background:#6f8388"></div><div class="abs" style="left:51px;top:427px;width:1px;height:61px;background:#ff0000"></div><div class="abs" style="left:51px;top:487px;width:6px;height:1px;background:#ff0000"></div><div class="abs" style="left:47px;top:15px;width:9px;height:9px;border:1px solid #6f8388;background:#2c3437"></div><div class="abs" style="left:49px;top:19px;width:5px;height:1px;background:#6f8388"></div><div class="abs" style="left:47px;top:106px;width:9px;height:9px;border:1px solid #6f8388;background:#2c3437"></div><div class="abs" style="left:49px;top:110px;width:5px;height:1px;background:#6f8388"></div><div class="abs" style="left:47px;top:197px;width:9px;height:9px;border:1px solid #6f8388;background:#2c3437"></div><div class="abs" style="left:49px;top:201px;width:5px;height:1px;background:#6f8388"></div><div class="abs" style="left:47px;top:210px;width:9px;height:9px;border:1px solid #6f8388;background:#2c3437"></div><div class="abs" style="left:49px;top:214px;width:5px;height:1px;background:#6f8388"></div><div class="abs" style="left:47px;top:301px;width:9px;height:9px;border:1px solid #6f8388;background:#2c3437"></div><div class="abs" style="left:49px;top:305px;width:5px;height:1px;background:#6f8388"></div><div class="abs" style="left:47px;top:314px;width:9px;height:9px;border:1px solid #6f8388;background:#2c3437"></div><div class="abs" style="left:49px;top:318px;width:5px;height:1px;background:#6f8388"></div><div class="abs" style="left:47px;top:392px;width:9px;height:9px;border:1px solid #6f8388;background:#2c3437"></div><div class="abs" style="left:49px;top:396px;width:5px;height:1px;background:#6f8388"></div><div class="abs" style="left:47px;top:509px;width:9px;height:9px;border:1px solid #6f8388;background:#2c3437"></div><div class="abs" style="left:49px;top:513px;width:5px;height:1px;background:#6f8388"></div><div class="abs" style="left:47px;top:535px;width:9px;height:9px;border:1px solid #6f8388;background:#2c3437"></div><div class="abs" style="left:49px;top:539px;width:5px;height:1px;background:#6f8388"></div><div class="abs" style="left:47px;top:418px;width:9px;height:9px;border:1px solid #ff0000;background:#2c3437"></div><div class="abs" style="left:49px;top:422px;width:5px;height:1px;background:#ff0000"></div><div class="abs" style="left:32px;top:456px;width:10px;height:10px;border-radius:5px;background:#ff0000;box-shadow:0 0 0 .6px #200"></div>
<span class="ln" style="top:1px">191</span><span class="ln" style="top:14px">192</span><span class="ln" style="top:27px">193</span><span class="ln" style="top:40px">194</span><span class="ln" style="top:53px">195</span><span class="ln" style="top:66px">196</span><span class="ln" style="top:79px">197</span><span class="ln" style="top:92px">198</span><span class="ln" style="top:105px">199</span><span class="ln" style="top:118px">200</span><span class="ln" style="top:131px">201</span><span class="ln" style="top:144px">202</span><span class="ln" style="top:157px">203</span><span class="ln" style="top:170px">204</span><span class="ln" style="top:183px">205</span><span class="ln" style="top:196px">206</span><span class="ln" style="top:209px">207</span><span class="ln" style="top:222px">208</span><span class="ln" style="top:235px">209</span><span class="ln" style="top:248px">210</span><span class="ln" style="top:261px">211</span><span class="ln" style="top:274px">212</span><span class="ln" style="top:287px">213</span><span class="ln" style="top:300px">214</span><span class="ln" style="top:313px">215</span><span class="ln" style="top:326px">216</span><span class="ln" style="top:339px">217</span><span class="ln" style="top:352px">218</span><span class="ln" style="top:365px">219</span><span class="ln" style="top:378px">220</span><span class="ln" style="top:391px">221</span><span class="ln" style="top:404px">222</span><span class="ln" style="top:417px">223</span><span class="ln" style="top:430px">224</span><span class="ln" style="top:443px">225</span><span class="ln" style="top:456px">226</span><span class="ln" style="top:469px">227</span><span class="ln" style="top:482px">228</span><span class="ln" style="top:495px">229</span><span class="ln" style="top:508px">230</span><span class="ln" style="top:521px">231</span><span class="ln" style="top:534px">232</span><span class="ln" style="top:547px">233</span><span class="ln" style="top:560px">234</span><span class="ln" style="top:573px">235</span><span class="ln" style="top:586px">236</span><span class="ln" style="top:599px">237</span><span class="ln" style="top:612px">238</span><span class="ln" style="top:625px">239</span><span class="ln" style="top:638px">240</span><span class="ln" style="top:651px">241</span><span class="ln" style="top:664px">242</span><span class="ln" style="top:677px">243</span><span class="ln" style="top:690px">244</span><span class="ln" style="top:703px">245</span>
<span class="cl" id="c191_0" style="left:107.00px;top:1px;--ls:1.073px"><i class="v">$time</i> <i class="o">=</i> <i class="v">$i</i> <i class="o">/</i> <i class="n">2</i><i class="o">;</i></span>
<span class="cl" id="c192_0" style="left:107.00px;top:14px;--ls:0.973px"><i class="k">if</i> <i class="o">(</i><i class="v">$time</i> <i class="o">&gt;=</i> <i class="v">$timeout_queue</i><i class="o">)</i> <i class="o">{</i></span>
<span class="cl" id="c193_0" style="left:123.00px;top:27px;--ls:1.361px"><i class="k">exit</i><i class="o">();</i></span>
<span class="cl" id="c194_0" style="left:107.00px;top:40px;--ls:0.800px"><i class="o">}</i></span>
<span class="cl" id="c195_0" style="left:107.00px;top:53px;--ls:1.902px"><i class="v">$i</i><i class="o">++;</i></span>
<span class="cl" id="c196_0" style="left:91.00px;top:66px;--ls:0.800px"><i class="o">}</i></span>
<span class="cl" id="c197_0" style="left:75.00px;top:79px;--ls:0.800px"><i class="o">}</i></span>
<span class="cl" id="c198_0" style="left:59.00px;top:92px;--ls:0.800px"><i class="o">}</i></span>
<span class="cl" id="c199_0" style="left:59.00px;top:105px;--ls:1.022px"><i class="k">if</i> <i class="o">(</i><i class="v">$stop</i> <i class="o">!=</i> <i class="s">"1"</i><i class="o">)</i> <i class="o">{</i></span>
<span class="cl" id="c200_0" style="left:75.00px;top:118px;--ls:0.971px"><i class="c">// Set Zones</i></span><span class="cl" id="c201_0" style="left:75.00px;top:131px;--ls:0.776px"><i class="v">$zones_mac_array</i></span><span class="cl" id="c201_1" style="left:212.00px;top:131px;--ls:1.373px"><i class="o">=</i> <i class="k">Array</i><i class="o">();</i></span>
<span class="cl" id="c202_0" style="left:75.00px;top:144px;--ls:0.731px"><i class="v">$zones_int_array</i></span><span class="cl" id="c202_1" style="left:202.00px;top:144px;--ls:1.373px"><i class="o">=</i> <i class="k">Array</i><i class="o">();</i></span>
<span class="cl" id="c203_0" style="left:75.00px;top:157px;--ls:0.785px"><i class="v">$zones_ext_array</i></span><span class="cl" id="c203_1" style="left:206.00px;top:157px;--ls:1.401px"><i class="o">=</i> <i class="k">Array</i><i class="o">();</i></span>
<span class="cl" id="c204_0" style="left:75.00px;top:170px;--ls:0.772px"><i class="v">$zones_name_array</i></span><span class="cl" id="c204_1" style="left:216.00px;top:170px;--ls:1.345px"><i class="o">=</i> <i class="k">Array</i><i class="o">();</i></span>
<span class="cl" id="c205_0" style="left:75.00px;top:183px;--ls:0.855px"><i class="v">$zones_soundcard_array</i> <i class="o">=</i> <i class="k">Array</i><i class="o">();</i></span>
<span class="cl" id="c206_0" style="left:75.00px;top:196px;--ls:0.878px"><i class="k">if</i> <i class="o">(</i><i class="v">$zone</i> <i class="o">==</i> <i class="s">"all"</i> <i class="o">&amp;&amp;</i> <i class="v">$zone</i> <i class="o">!=</i> <i class="s">"0"</i><i class="o">)</i> <i class="o">{</i></span>
<span class="cl" id="c207_0" style="left:91.00px;top:209px;--ls:0.863px"><i class="k">for</i> <i class="o">(</i><i class="v">$i</i> <i class="o">=</i> <i class="n">0</i><i class="o">;</i> <i class="v">$i</i> <i class="o">&lt;</i> <i class="v">$config</i><i class="o">[</i>SLM_ANZAHL<i class="o">];</i> <i class="v">$i</i><i class="o">++)</i> <i class="o">{</i></span>
<span class="cl" id="c208_0" style="left:107.00px;top:222px;--ls:0.837px"><i class="k">array_push</i><i class="o">(</i><i class="v">$zones_mac_array</i><i class="o">,</i> </span><span class="cl" id="c208_1" style="left:304.50px;top:222px;--ls:0.754px"><i class="v">$configzone</i><i class="o">[</i><i class="v">$i</i> <i class="o">+</i> <i class="n">1</i><i class="o">]</i></span><span class="cl" id="c208_2" style="left:415.75px;top:222px;--ls:0.713px"><i class="o">[</i>SLM_MAC_ADDRESS<i class="o">][</i><i class="v">$i</i> <i class="o">+</i> <i class="n">1</i><i class="o">]);</i></span>
<span class="cl" id="c209_0" style="left:107.00px;top:235px;--ls:0.823px"><i class="k">array_push</i><i class="o">(</i><i class="v">$zones_int_array</i><i class="o">,</i> </span><span class="cl" id="c209_1" style="left:294.50px;top:235px;--ls:0.807px"><i class="v">$configzone</i><i class="o">[</i><i class="v">$i</i> <i class="o">+</i> <i class="n">1</i><i class="o">]</i></span><span class="cl" id="c209_2" style="left:406.75px;top:235px;--ls:0.675px"><i class="o">[</i>SLM_MAC_ADDRESS<i class="o">][</i><i class="v">$i</i> <i class="o">+</i> <i class="n">1</i><i class="o">]);</i></span>
<span class="cl" id="c210_0" style="left:107.00px;top:248px;--ls:0.841px"><i class="k">array_push</i><i class="o">(</i><i class="v">$zones_name_array</i><i class="o">,</i> </span><span class="cl" id="c210_1" style="left:312.50px;top:248px;--ls:0.794px"><i class="v">$configzone</i><i class="o">[</i><i class="v">$i</i> <i class="o">+</i> <i class="n">1</i><i class="o">]</i></span><span class="cl" id="c210_2" style="left:424.50px;top:248px;--ls:0.742px"><i class="o">[</i>SLM_NAME<i class="o">][</i><i class="v">$i</i> <i class="o">+</i> <i class="n">1</i><i class="o">]);</i></span>
<span class="cl" id="c211_0" style="left:107.00px;top:261px;--ls:0.780px"><i class="k">array_push</i><i class="o">(</i><i class="v">$zones_soundcard_array</i><i class="o">,</i> </span><span class="cl" id="c211_1" style="left:339.50px;top:261px;--ls:0.794px"><i class="v">$configzone</i><i class="o">[</i><i class="v">$i</i> <i class="o">+</i> <i class="n">1</i><i class="o">]</i></span><span class="cl" id="c211_2" style="left:451.50px;top:261px;--ls:0.728px"><i class="o">[</i>SLM_SOUNDCARD<i class="o">][</i><i class="v">$i</i> <i class="o">+</i> <i class="n">1</i><i class="o">]);</i></span>
<span class="cl" id="c212_0" style="left:91.00px;top:274px;--ls:0.800px"><i class="o">}</i></span>
<span class="cl" id="c213_0" style="left:75.00px;top:287px;--ls:0.800px"><i class="o">}</i></span>
<span class="cl" id="c214_0" style="left:75.00px;top:300px;--ls:0.878px"><i class="k">if</i> <i class="o">(</i><i class="v">$zone_ext</i> <i class="o">==</i> <i class="s">"all"</i> <i class="o">&amp;&amp;</i> <i class="v">$zone_ext</i> <i class="o">!=</i> <i class="s">"0"</i><i class="o">)</i> <i class="o">{</i></span>
<span class="cl" id="c215_0" style="left:91.00px;top:313px;--ls:0.792px"><i class="k">for</i> <i class="o">(</i><i class="v">$i</i> <i class="o">=</i> <i class="n">0</i><i class="o">;</i> <i class="v">$i</i> <i class="o">&lt;</i> <i class="v">$config</i><i class="o">[</i>SLM_ANZAHL_EXT<i class="o">];</i> <i class="v">$i</i><i class="o">++)</i> <i class="o">{</i></span>
<span class="cl" id="c216_0" style="left:107.00px;top:326px;--ls:0.837px"><i class="k">array_push</i><i class="o">(</i><i class="v">$zones_mac_array</i><i class="o">,</i> </span><span class="cl" id="c216_1" style="left:304.50px;top:326px;--ls:0.798px"><i class="v">$configzone_ext</i><i class="o">[</i><i class="v">$i</i> <i class="o">+</i> <i class="n">1</i><i class="o">]</i></span><span class="cl" id="c216_2" style="left:441.50px;top:326px;--ls:0.593px"><i class="o">[</i>SLM_MAC_ADDRESS_EXT<i class="o">][</i><i class="v">$i</i> <i class="o">+</i> <i class="n">1</i><i class="o">]);</i></span>
<span class="cl" id="c217_0" style="left:107.00px;top:339px;--ls:0.841px"><i class="k">array_push</i><i class="o">(</i><i class="v">$zones_name_array</i><i class="o">,</i> </span><span class="cl" id="c217_1" style="left:312.50px;top:339px;--ls:0.798px"><i class="v">$configzone_ext</i><i class="o">[</i><i class="v">$i</i> <i class="o">+</i> <i class="n">1</i><i class="o">]</i></span><span class="cl" id="c217_2" style="left:449.50px;top:339px;--ls:0.613px"><i class="o">[</i>SLM_NAME_EXT<i class="o">][</i><i class="v">$i</i> <i class="o">+</i> <i class="n">1</i><i class="o">]);</i></span>
<span class="cl" id="c218_0" style="left:107.00px;top:352px;--ls:0.842px"><i class="k">array_push</i><i class="o">(</i><i class="v">$zones_ext_array</i><i class="o">,</i> </span><span class="cl" id="c218_1" style="left:298.25px;top:352px;--ls:0.819px"><i class="v">$configzone_ext</i><i class="o">[</i><i class="v">$i</i> <i class="o">+</i> <i class="n">1</i><i class="o">]</i></span><span class="cl" id="c218_2" style="left:435.75px;top:352px;--ls:0.593px"><i class="o">[</i>SLM_MAC_ADDRESS_EXT<i class="o">][</i><i class="v">$i</i> <i class="o">+</i> <i class="n">1</i><i class="o">]);</i></span>
<span class="cl" id="c219_0" style="left:91.00px;top:365px;--ls:0.800px"><i class="o">}</i></span>
<span class="cl" id="c220_0" style="left:75.00px;top:378px;--ls:0.800px"><i class="o">}</i></span>
<span class="cl" id="c221_0" style="left:75.00px;top:391px;--ls:0.850px"><i class="k">if</i> <i class="o">(</i><i class="v">$zone</i> <i class="o">!=</i> <i class="s">"all"</i> <i class="o">&amp;&amp;</i> <i class="v">$zone</i> <i class="o">!=</i> <i class="s">"0"</i><i class="o">)</i> <i class="o">{</i></span>
<span class="cl" id="c222_0" style="left:91.00px;top:404px;--ls:0.831px"><i class="v">$zone_player</i> <i class="o">=</i> <i class="k">explode</i><i class="o">(</i><i class="s">","</i><i class="o">,</i> <i class="v">$zone</i><i class="o">);</i></span>
<span class="cl" id="c223_0" style="left:91.00px;top:417px;--ls:0.965px"><i class="k">for</i> <i class="o">(</i><i class="v">$i</i> <i class="o">=</i> <i class="n">0</i><i class="o">;</i> <i class="v">$i</i> <i class="o">&lt;</i> <i class="k">count</i><i class="o">(</i><i class="v">$zone_player</i><i class="o">);</i> <i class="v">$i</i><i class="o">++)</i> <i class="o">{</i></span>
<span class="cl" id="c224_0" style="left:107.00px;top:430px;--ls:0.837px"><i class="k">array_push</i><i class="o">(</i><i class="v">$zones_mac_array</i><i class="o">,</i> </span><span class="cl" id="c224_1" style="left:304.50px;top:430px;--ls:0.781px"><i class="v">$configzone</i><i class="o">[</i><i class="v">$zone_player</i><i class="o">[</i><i class="v">$i</i><i class="o">]]</i></span><span class="cl" id="c224_2" style="left:480.00px;top:430px;--ls:0.670px"><i class="o">[</i>SLM_MAC_ADDRESS<i class="o">][</i><i class="v">$zone_player</i><i class="o">[</i><i class="v">$i</i><i class="o">]]);</i></span>
<span class="cl" id="c225_0" style="left:107.00px;top:443px;--ls:0.823px"><i class="k">array_push</i><i class="o">(</i><i class="v">$zones_int_array</i><i class="o">,</i> </span><span class="cl" id="c225_1" style="left:294.50px;top:443px;--ls:0.807px"><i class="v">$configzone</i><i class="o">[</i><i class="v">$i</i> <i class="o">+</i> <i class="n">1</i><i class="o">]</i></span><span class="cl" id="c225_2" style="left:406.75px;top:443px;--ls:0.675px"><i class="o">[</i>SLM_MAC_ADDRESS<i class="o">][</i><i class="v">$i</i> <i class="o">+</i> <i class="n">1</i><i class="o">]);</i></span>
<span class="cl" id="c226_0" style="left:107.00px;top:456px;--ls:0.841px"><i class="k">array_push</i><i class="o">(</i><i class="v">$zones_name_array</i><i class="o">,</i> </span><span class="cl" id="c226_1" style="left:312.50px;top:456px;--ls:0.790px"><i class="v">$configzone</i><i class="o">[</i><i class="v">$zone_player</i><i class="o">[</i><i class="v">$i</i><i class="o">]]</i></span><span class="cl" id="c226_2" style="left:488.25px;top:456px;--ls:0.713px"><i class="o">[</i>SLM_NAME<i class="o">][</i><i class="v">$zone_player</i><i class="o">[</i><i class="v">$i</i><i class="o">]]);</i></span>
<span class="cl" id="c227_0" style="left:107.00px;top:469px;--ls:0.780px"><i class="k">array_push</i><i class="o">(</i><i class="v">$zones_soundcard_array</i><i class="o">,</i> </span><span class="cl" id="c227_1" style="left:339.50px;top:469px;--ls:0.794px"><i class="v">$configzone</i><i class="o">[</i><i class="v">$i</i> <i class="o">+</i> <i class="n">1</i><i class="o">]</i></span><span class="cl" id="c227_2" style="left:451.50px;top:469px;--ls:0.707px"><i class="o">[</i>SLM_SOUNDCARD<i class="o">][</i><i class="v">$i</i> <i class="o">+</i> <i class="n">1</i><i class="o">]);</i></span>
<span class="cl" id="c228_0" style="left:91.00px;top:482px;--ls:0.800px"><i class="o">}</i></span>
<span class="cl" id="c229_0" style="left:75.00px;top:495px;--ls:0.800px"><i class="o">}</i></span>
<span class="cl" id="c230_0" style="left:75.00px;top:508px;--ls:0.844px"><i class="k">if</i> <i class="o">(</i><i class="v">$zone_ext</i> <i class="o">!=</i> <i class="s">"all"</i> <i class="o">&amp;&amp;</i> <i class="v">$zone_ext</i> <i class="o">!=</i> <i class="s">"0"</i><i class="o">)</i> <i class="o">{</i></span>
<span class="cl" id="c231_0" style="left:91.00px;top:521px;--ls:0.828px"><i class="v">$zone_player_ext</i> <i class="o">=</i> <i class="k">explode</i><i class="o">(</i><i class="s">","</i><i class="o">,</i> <i class="v">$zone_ext</i><i class="o">);</i></span>
<span class="cl" id="c232_0" style="left:91.00px;top:534px;--ls:0.953px"><i class="k">for</i> <i class="o">(</i><i class="v">$i</i> <i class="o">=</i> <i class="n">0</i><i class="o">;</i> <i class="v">$i</i> <i class="o">&lt;</i> <i class="k">count</i><i class="o">(</i><i class="v">$zone_player_ext</i><i class="o">);</i> <i class="v">$i</i><i class="o">++)</i> <i class="o">{</i></span>
<span class="cl" id="c233_0" style="left:107.00px;top:547px;--ls:0.837px"><i class="k">array_push</i><i class="o">(</i><i class="v">$zones_mac_array</i><i class="o">,</i> </span><span class="cl" id="c233_1" style="left:304.50px;top:547px;--ls:0.789px"><i class="v">$configzone_ext</i><i class="o">[</i><i class="v">$zone_player_ext</i><i class="o">[</i><i class="v">$i</i><i class="o">]]</i></span><span class="cl" id="c233_2" style="left:530.00px;top:547px;--ls:0.633px"><i class="o">[</i>SLM_MAC_ADDRESS_EXT<i class="o">][</i><i class="v">$zone_player_ext</i><i class="o">[</i><i class="v">$i</i><i class="o">]]);</i></span>
<span class="cl" id="c234_0" style="left:107.00px;top:560px;--ls:0.841px"><i class="k">array_push</i><i class="o">(</i><i class="v">$zones_name_array</i><i class="o">,</i> </span><span class="cl" id="c234_1" style="left:312.50px;top:560px;--ls:0.796px"><i class="v">$configzone_ext</i><i class="o">[</i><i class="v">$zone_player_ext</i><i class="o">[</i><i class="v">$i</i><i class="o">]]</i></span><span class="cl" id="c234_2" style="left:538.25px;top:560px;--ls:0.661px"><i class="o">[</i>SLM_NAME_EXT<i class="o">][</i><i class="v">$zone_player_ext</i><i class="o">[</i><i class="v">$i</i><i class="o">]]);</i></span>
<span class="cl" id="c235_0" style="left:107.00px;top:573px;--ls:0.842px"><i class="k">array_push</i><i class="o">(</i><i class="v">$zones_ext_array</i><i class="o">,</i> </span><span class="cl" id="c235_1" style="left:298.25px;top:573px;--ls:0.796px"><i class="v">$configzone_ext</i><i class="o">[</i><i class="v">$zone_player_ext</i><i class="o">[</i><i class="v">$i</i><i class="o">]]</i></span><span class="cl" id="c235_2" style="left:524.00px;top:573px;--ls:0.639px"><i class="o">[</i>SLM_MAC_ADDRESS_EXT<i class="o">][</i><i class="v">$zone_player_ext</i><i class="o">[</i><i class="v">$i</i><i class="o">]]);</i></span>
<span class="cl" id="c236_0" style="left:91.00px;top:586px;--ls:0.800px"><i class="o">}</i></span>
<span class="cl" id="c237_0" style="left:75.00px;top:599px;--ls:0.800px"><i class="o">}</i></span>
<span class="cl" id="c238_0" style="left:75.00px;top:612px;--ls:0.732px"><i class="c">// Read <span class="sq">Soundcard</span> Settings</i></span><span class="cl" id="c239_0" style="left:75.00px;top:625px;--ls:0.725px"><i class="v">$channels_multi_array</i></span><span class="cl" id="c239_1" style="left:222.00px;top:625px;--ls:1.234px"><i class="o">=</i> <i class="k">Array</i><i class="o">();</i></span>
<span class="cl" id="c240_0" style="left:75.00px;top:638px;--ls:0.782px"><i class="v">$channel_array</i></span><span class="cl" id="c240_1" style="left:209.00px;top:638px;--ls:1.206px"><i class="o">=</i> <i class="k">Array</i><i class="o">();</i></span>
<span class="cl" id="c241_0" style="left:75.00px;top:651px;--ls:0.721px"><i class="v">$channel_all_array</i></span><span class="cl" id="c241_1" style="left:212.00px;top:651px;--ls:1.373px"><i class="o">=</i> <i class="k">Array</i><i class="o">();</i></span>
<span class="cl" id="c242_0" style="left:75.00px;top:664px;--ls:0.678px"><i class="v">$lines</i></span><span class="cl" id="c242_1" style="left:185.00px;top:664px;--ls:0.796px"><i class="o">=</i> file<i class="o">(</i><i class="s">'/opt/music_server/soundcard_cfg/<span class="sq">defaultcard</span>/default.<span class="sq">cfg</span>'</i><i class="o">);</i></span>
<span class="cl" id="c243_0" style="left:75.00px;top:677px;--ls:0.725px"><i class="v">$channels_multi_array</i></span><span class="cl" id="c243_1" style="left:222.00px;top:677px;--ls:0.832px"><i class="o">=</i> <i class="k">array_slice</i><i class="o">(</i><i class="v">$lines</i><i class="o">,</i> <i class="n">18</i><i class="o">,</i> <i class="n">1</i><i class="o">);</i></span>
<span class="cl" id="c244_0" style="left:75.00px;top:690px;--ls:0.825px"><i class="v">$channels_multi_array</i><i class="o">[</i><i class="n">0</i><i class="o">]</i> <i class="o">=</i> substr<i class="o">(</i><i class="v">$channels_multi_array</i><i class="o">[</i><i class="n">0</i><i class="o">],</i> <i class="o">-</i><i class="n">3</i><i class="o">);</i></span>
<span class="cl" id="c245_0" style="left:75.00px;top:703px;--ls:0.909px"><i class="v">$channels_multi_array</i><i class="o">[</i><i class="n">0</i><i class="o">]</i> <i class="o">=</i> preg_replace<i class="o">(</i><i class="s">"/\r|\n|\t/"</i><i class="o">,</i> <i class="s">""</i><i class="o">,</i> <i class="v">$channels_multi_array</i><i class="o">[</i><i class="n">0</i><i class="o">]);</i></span>
</div>
<div class="abs" style="left:1450px;top:2px;width:19px;height:716px;background:#f0f0f0;border-left:1px solid #e3e3e3"></div><div class="abs" style="left:0;top:0;width:1470px;height:1px;background:#fff"></div><div class="abs" style="left:1450px;top:1px;width:20px;height:1px;background:#a0a0a0"></div><div class="abs" style="left:1469px;top:1px;width:1px;height:718px;background:#a0a0a0"></div><div class="abs" style="left:1451px;top:4px;width:15px;height:16px;border:1px solid #979797;border-radius:2px;background:linear-gradient(180deg,#f8f8f8,#e4e4e4 50%,#d4d4d4 51%,#dcdcdc)"></div><svg class="abs" style="left:1455px;top:9px" width="8" height="5"><path d="M0 4.5 L4 .5 L8 4.5Z" fill="#444"/></svg></div>
<div class="abs" style="left:1474px;top:90px;width:446px;height:723px;background:#f0f0f0;border-top:1px solid #a0a0a0;border-left:1px solid #a0a0a0"></div><div id="map" class="abs" style="left:1476px;top:92px;width:444px;height:718px;background:linear-gradient(90deg,#54595d 0,#54595d 442px,#fff 442px);overflow:hidden">
<div class="abs" style="left:0;top:430px;width:444px;height:216px;background:linear-gradient(90deg,#513f2b 0,#513f2b 442px,#ffe6cc 442px)"></div><div class="abs" style="left:0;top:572px;width:444px;height:4px;background:#fce4cc"></div><div class="abs" style="left:0;top:432px;width:1600px;height:720px;transform-origin:0 0;transform:scale(0.2680,0.3077)"><span class="cl mm" style="left:51.0px;top:0px;--ls:1.073px"><i class="v">$time</i> <i class="o">=</i> <i class="v">$i</i> <i class="o">/</i> <i class="n">2</i><i class="o">;</i></span><span class="cl mm" style="left:51.0px;top:13px;--ls:0.973px"><i class="k">if</i> <i class="o">(</i><i class="v">$time</i> <i class="o">&gt;=</i> <i class="v">$timeout_queue</i><i class="o">)</i> <i class="o">{</i></span><span class="cl mm" style="left:67.0px;top:26px;--ls:1.361px"><i class="k">exit</i><i class="o">();</i></span><span class="cl mm" style="left:51.0px;top:39px;--ls:0.800px"><i class="o">}</i></span><span class="cl mm" style="left:51.0px;top:52px;--ls:1.902px"><i class="v">$i</i><i class="o">++;</i></span><span class="cl mm" style="left:35.0px;top:65px;--ls:0.800px"><i class="o">}</i></span><span class="cl mm" style="left:19.0px;top:78px;--ls:0.800px"><i class="o">}</i></span><span class="cl mm" style="left:3.0px;top:91px;--ls:0.800px"><i class="o">}</i></span><span class="cl mm" style="left:3.0px;top:104px;--ls:1.022px"><i class="k">if</i> <i class="o">(</i><i class="v">$stop</i> <i class="o">!=</i> <i class="s">"1"</i><i class="o">)</i> <i class="o">{</i></span><span class="cl mm" style="left:19.0px;top:117px;--ls:0.971px"><i class="c">// Set Zones</i></span><span class="cl mm" style="left:19.0px;top:130px;--ls:0.776px"><i class="v">$zones_mac_array</i></span><span class="cl mm" style="left:156.0px;top:130px;--ls:1.373px"><i class="o">=</i> <i class="k">Array</i><i class="o">();</i></span><span class="cl mm" style="left:19.0px;top:143px;--ls:0.731px"><i class="v">$zones_int_array</i></span><span class="cl mm" style="left:146.0px;top:143px;--ls:1.373px"><i class="o">=</i> <i class="k">Array</i><i class="o">();</i></span><span class="cl mm" style="left:19.0px;top:156px;--ls:0.785px"><i class="v">$zones_ext_array</i></span><span class="cl mm" style="left:150.0px;top:156px;--ls:1.401px"><i class="o">=</i> <i class="k">Array</i><i class="o">();</i></span><span class="cl mm" style="left:19.0px;top:169px;--ls:0.772px"><i class="v">$zones_name_array</i></span><span class="cl mm" style="left:160.0px;top:169px;--ls:1.345px"><i class="o">=</i> <i class="k">Array</i><i class="o">();</i></span><span class="cl mm" style="left:19.0px;top:182px;--ls:0.855px"><i class="v">$zones_soundcard_array</i> <i class="o">=</i> <i class="k">Array</i><i class="o">();</i></span><span class="cl mm" style="left:19.0px;top:195px;--ls:0.878px"><i class="k">if</i> <i class="o">(</i><i class="v">$zone</i> <i class="o">==</i> <i class="s">"all"</i> <i class="o">&amp;&amp;</i> <i class="v">$zone</i> <i class="o">!=</i> <i class="s">"0"</i><i class="o">)</i> <i class="o">{</i></span><span class="cl mm" style="left:35.0px;top:208px;--ls:0.863px"><i class="k">for</i> <i class="o">(</i><i class="v">$i</i> <i class="o">=</i> <i class="n">0</i><i class="o">;</i> <i class="v">$i</i> <i class="o">&lt;</i> <i class="v">$config</i><i class="o">[</i>SLM_ANZAHL<i class="o">];</i> <i class="v">$i</i><i class="o">++)</i> <i class="o">{</i></span><span class="cl mm" style="left:51.0px;top:221px;--ls:0.837px"><i class="k">array_push</i><i class="o">(</i><i class="v">$zones_mac_array</i><i class="o">,</i> </span><span class="cl mm" style="left:248.5px;top:221px;--ls:0.754px"><i class="v">$configzone</i><i class="o">[</i><i class="v">$i</i> <i class="o">+</i> <i class="n">1</i><i class="o">]</i></span><span class="cl mm" style="left:359.8px;top:221px;--ls:0.713px"><i class="o">[</i>SLM_MAC_ADDRESS<i class="o">][</i><i class="v">$i</i> <i class="o">+</i> <i class="n">1</i><i class="o">]);</i></span><span class="cl mm" style="left:51.0px;top:234px;--ls:0.823px"><i class="k">array_push</i><i class="o">(</i><i class="v">$zones_int_array</i><i class="o">,</i> </span><span class="cl mm" style="left:238.5px;top:234px;--ls:0.807px"><i class="v">$configzone</i><i class="o">[</i><i class="v">$i</i> <i class="o">+</i> <i class="n">1</i><i class="o">]</i></span><span class="cl mm" style="left:350.8px;top:234px;--ls:0.675px"><i class="o">[</i>SLM_MAC_ADDRESS<i class="o">][</i><i class="v">$i</i> <i class="o">+</i> <i class="n">1</i><i class="o">]);</i></span><span class="cl mm" style="left:51.0px;top:247px;--ls:0.841px"><i class="k">array_push</i><i class="o">(</i><i class="v">$zones_name_array</i><i class="o">,</i> </span><span class="cl mm" style="left:256.5px;top:247px;--ls:0.794px"><i class="v">$configzone</i><i class="o">[</i><i class="v">$i</i> <i class="o">+</i> <i class="n">1</i><i class="o">]</i></span><span class="cl mm" style="left:368.5px;top:247px;--ls:0.742px"><i class="o">[</i>SLM_NAME<i class="o">][</i><i class="v">$i</i> <i class="o">+</i> <i class="n">1</i><i class="o">]);</i></span><span class="cl mm" style="left:51.0px;top:260px;--ls:0.780px"><i class="k">array_push</i><i class="o">(</i><i class="v">$zones_soundcard_array</i><i class="o">,</i> </span><span class="cl mm" style="left:283.5px;top:260px;--ls:0.794px"><i class="v">$configzone</i><i class="o">[</i><i class="v">$i</i> <i class="o">+</i> <i class="n">1</i><i class="o">]</i></span><span class="cl mm" style="left:395.5px;top:260px;--ls:0.728px"><i class="o">[</i>SLM_SOUNDCARD<i class="o">][</i><i class="v">$i</i> <i class="o">+</i> <i class="n">1</i><i class="o">]);</i></span><span class="cl mm" style="left:35.0px;top:273px;--ls:0.800px"><i class="o">}</i></span><span class="cl mm" style="left:19.0px;top:286px;--ls:0.800px"><i class="o">}</i></span><span class="cl mm" style="left:19.0px;top:299px;--ls:0.878px"><i class="k">if</i> <i class="o">(</i><i class="v">$zone_ext</i> <i class="o">==</i> <i class="s">"all"</i> <i class="o">&amp;&amp;</i> <i class="v">$zone_ext</i> <i class="o">!=</i> <i class="s">"0"</i><i class="o">)</i> <i class="o">{</i></span><span class="cl mm" style="left:35.0px;top:312px;--ls:0.792px"><i class="k">for</i> <i class="o">(</i><i class="v">$i</i> <i class="o">=</i> <i class="n">0</i><i class="o">;</i> <i class="v">$i</i> <i class="o">&lt;</i> <i class="v">$config</i><i class="o">[</i>SLM_ANZAHL_EXT<i class="o">];</i> <i class="v">$i</i><i class="o">++)</i> <i class="o">{</i></span><span class="cl mm" style="left:51.0px;top:325px;--ls:0.837px"><i class="k">array_push</i><i class="o">(</i><i class="v">$zones_mac_array</i><i class="o">,</i> </span><span class="cl mm" style="left:248.5px;top:325px;--ls:0.798px"><i class="v">$configzone_ext</i><i class="o">[</i><i class="v">$i</i> <i class="o">+</i> <i class="n">1</i><i class="o">]</i></span><span class="cl mm" style="left:385.5px;top:325px;--ls:0.593px"><i class="o">[</i>SLM_MAC_ADDRESS_EXT<i class="o">][</i><i class="v">$i</i> <i class="o">+</i> <i class="n">1</i><i class="o">]);</i></span><span class="cl mm" style="left:51.0px;top:338px;--ls:0.841px"><i class="k">array_push</i><i class="o">(</i><i class="v">$zones_name_array</i><i class="o">,</i> </span><span class="cl mm" style="left:256.5px;top:338px;--ls:0.798px"><i class="v">$configzone_ext</i><i class="o">[</i><i class="v">$i</i> <i class="o">+</i> <i class="n">1</i><i class="o">]</i></span><span class="cl mm" style="left:393.5px;top:338px;--ls:0.613px"><i class="o">[</i>SLM_NAME_EXT<i class="o">][</i><i class="v">$i</i> <i class="o">+</i> <i class="n">1</i><i class="o">]);</i></span><span class="cl mm" style="left:51.0px;top:351px;--ls:0.842px"><i class="k">array_push</i><i class="o">(</i><i class="v">$zones_ext_array</i><i class="o">,</i> </span><span class="cl mm" style="left:242.2px;top:351px;--ls:0.819px"><i class="v">$configzone_ext</i><i class="o">[</i><i class="v">$i</i> <i class="o">+</i> <i class="n">1</i><i class="o">]</i></span><span class="cl mm" style="left:379.8px;top:351px;--ls:0.593px"><i class="o">[</i>SLM_MAC_ADDRESS_EXT<i class="o">][</i><i class="v">$i</i> <i class="o">+</i> <i class="n">1</i><i class="o">]);</i></span><span class="cl mm" style="left:35.0px;top:364px;--ls:0.800px"><i class="o">}</i></span><span class="cl mm" style="left:19.0px;top:377px;--ls:0.800px"><i class="o">}</i></span><span class="cl mm" style="left:19.0px;top:390px;--ls:0.850px"><i class="k">if</i> <i class="o">(</i><i class="v">$zone</i> <i class="o">!=</i> <i class="s">"all"</i> <i class="o">&amp;&amp;</i> <i class="v">$zone</i> <i class="o">!=</i> <i class="s">"0"</i><i class="o">)</i> <i class="o">{</i></span><span class="cl mm" style="left:35.0px;top:403px;--ls:0.831px"><i class="v">$zone_player</i> <i class="o">=</i> <i class="k">explode</i><i class="o">(</i><i class="s">","</i><i class="o">,</i> <i class="v">$zone</i><i class="o">);</i></span><span class="cl mm" style="left:35.0px;top:416px;--ls:0.965px"><i class="k">for</i> <i class="o">(</i><i class="v">$i</i> <i class="o">=</i> <i class="n">0</i><i class="o">;</i> <i class="v">$i</i> <i class="o">&lt;</i> <i class="k">count</i><i class="o">(</i><i class="v">$zone_player</i><i class="o">);</i> <i class="v">$i</i><i class="o">++)</i> <i class="o">{</i></span><span class="cl mm" style="left:51.0px;top:429px;--ls:0.837px"><i class="k">array_push</i><i class="o">(</i><i class="v">$zones_mac_array</i><i class="o">,</i> </span><span class="cl mm" style="left:248.5px;top:429px;--ls:0.781px"><i class="v">$configzone</i><i class="o">[</i><i class="v">$zone_player</i><i class="o">[</i><i class="v">$i</i><i class="o">]]</i></span><span class="cl mm" style="left:424.0px;top:429px;--ls:0.670px"><i class="o">[</i>SLM_MAC_ADDRESS<i class="o">][</i><i class="v">$zone_player</i><i class="o">[</i><i class="v">$i</i><i class="o">]]);</i></span><span class="cl mm" style="left:51.0px;top:442px;--ls:0.823px"><i class="k">array_push</i><i class="o">(</i><i class="v">$zones_int_array</i><i class="o">,</i> </span><span class="cl mm" style="left:238.5px;top:442px;--ls:0.807px"><i class="v">$configzone</i><i class="o">[</i><i class="v">$i</i> <i class="o">+</i> <i class="n">1</i><i class="o">]</i></span><span class="cl mm" style="left:350.8px;top:442px;--ls:0.675px"><i class="o">[</i>SLM_MAC_ADDRESS<i class="o">][</i><i class="v">$i</i> <i class="o">+</i> <i class="n">1</i><i class="o">]);</i></span><span class="cl mm" style="left:51.0px;top:455px;--ls:0.841px"><i class="k">array_push</i><i class="o">(</i><i class="v">$zones_name_array</i><i class="o">,</i> </span><span class="cl mm" style="left:256.5px;top:455px;--ls:0.790px"><i class="v">$configzone</i><i class="o">[</i><i class="v">$zone_player</i><i class="o">[</i><i class="v">$i</i><i class="o">]]</i></span><span class="cl mm" style="left:432.2px;top:455px;--ls:0.713px"><i class="o">[</i>SLM_NAME<i class="o">][</i><i class="v">$zone_player</i><i class="o">[</i><i class="v">$i</i><i class="o">]]);</i></span><span class="cl mm" style="left:51.0px;top:468px;--ls:0.780px"><i class="k">array_push</i><i class="o">(</i><i class="v">$zones_soundcard_array</i><i class="o">,</i> </span><span class="cl mm" style="left:283.5px;top:468px;--ls:0.794px"><i class="v">$configzone</i><i class="o">[</i><i class="v">$i</i> <i class="o">+</i> <i class="n">1</i><i class="o">]</i></span><span class="cl mm" style="left:395.5px;top:468px;--ls:0.707px"><i class="o">[</i>SLM_SOUNDCARD<i class="o">][</i><i class="v">$i</i> <i class="o">+</i> <i class="n">1</i><i class="o">]);</i></span><span class="cl mm" style="left:35.0px;top:481px;--ls:0.800px"><i class="o">}</i></span><span class="cl mm" style="left:19.0px;top:494px;--ls:0.800px"><i class="o">}</i></span><span class="cl mm" style="left:19.0px;top:507px;--ls:0.844px"><i class="k">if</i> <i class="o">(</i><i class="v">$zone_ext</i> <i class="o">!=</i> <i class="s">"all"</i> <i class="o">&amp;&amp;</i> <i class="v">$zone_ext</i> <i class="o">!=</i> <i class="s">"0"</i><i class="o">)</i> <i class="o">{</i></span><span class="cl mm" style="left:35.0px;top:520px;--ls:0.828px"><i class="v">$zone_player_ext</i> <i class="o">=</i> <i class="k">explode</i><i class="o">(</i><i class="s">","</i><i class="o">,</i> <i class="v">$zone_ext</i><i class="o">);</i></span><span class="cl mm" style="left:35.0px;top:533px;--ls:0.953px"><i class="k">for</i> <i class="o">(</i><i class="v">$i</i> <i class="o">=</i> <i class="n">0</i><i class="o">;</i> <i class="v">$i</i> <i class="o">&lt;</i> <i class="k">count</i><i class="o">(</i><i class="v">$zone_player_ext</i><i class="o">);</i> <i class="v">$i</i><i class="o">++)</i> <i class="o">{</i></span><span class="cl mm" style="left:51.0px;top:546px;--ls:0.837px"><i class="k">array_push</i><i class="o">(</i><i class="v">$zones_mac_array</i><i class="o">,</i> </span><span class="cl mm" style="left:248.5px;top:546px;--ls:0.789px"><i class="v">$configzone_ext</i><i class="o">[</i><i class="v">$zone_player_ext</i><i class="o">[</i><i class="v">$i</i><i class="o">]]</i></span><span class="cl mm" style="left:474.0px;top:546px;--ls:0.633px"><i class="o">[</i>SLM_MAC_ADDRESS_EXT<i class="o">][</i><i class="v">$zone_player_ext</i><i class="o">[</i><i class="v">$i</i><i class="o">]]);</i></span><span class="cl mm" style="left:51.0px;top:559px;--ls:0.841px"><i class="k">array_push</i><i class="o">(</i><i class="v">$zones_name_array</i><i class="o">,</i> </span><span class="cl mm" style="left:256.5px;top:559px;--ls:0.796px"><i class="v">$configzone_ext</i><i class="o">[</i><i class="v">$zone_player_ext</i><i class="o">[</i><i class="v">$i</i><i class="o">]]</i></span><span class="cl mm" style="left:482.2px;top:559px;--ls:0.661px"><i class="o">[</i>SLM_NAME_EXT<i class="o">][</i><i class="v">$zone_player_ext</i><i class="o">[</i><i class="v">$i</i><i class="o">]]);</i></span><span class="cl mm" style="left:51.0px;top:572px;--ls:0.842px"><i class="k">array_push</i><i class="o">(</i><i class="v">$zones_ext_array</i><i class="o">,</i> </span><span class="cl mm" style="left:242.2px;top:572px;--ls:0.796px"><i class="v">$configzone_ext</i><i class="o">[</i><i class="v">$zone_player_ext</i><i class="o">[</i><i class="v">$i</i><i class="o">]]</i></span><span class="cl mm" style="left:468.0px;top:572px;--ls:0.639px"><i class="o">[</i>SLM_MAC_ADDRESS_EXT<i class="o">][</i><i class="v">$zone_player_ext</i><i class="o">[</i><i class="v">$i</i><i class="o">]]);</i></span><span class="cl mm" style="left:35.0px;top:585px;--ls:0.800px"><i class="o">}</i></span><span class="cl mm" style="left:19.0px;top:598px;--ls:0.800px"><i class="o">}</i></span><span class="cl mm" style="left:19.0px;top:611px;--ls:0.732px"><i class="c">// Read <span class="sq">Soundcard</span> Settings</i></span><span class="cl mm" style="left:19.0px;top:624px;--ls:0.725px"><i class="v">$channels_multi_array</i></span><span class="cl mm" style="left:166.0px;top:624px;--ls:1.234px"><i class="o">=</i> <i class="k">Array</i><i class="o">();</i></span><span class="cl mm" style="left:19.0px;top:637px;--ls:0.782px"><i class="v">$channel_array</i></span><span class="cl mm" style="left:153.0px;top:637px;--ls:1.206px"><i class="o">=</i> <i class="k">Array</i><i class="o">();</i></span><span class="cl mm" style="left:19.0px;top:650px;--ls:0.721px"><i class="v">$channel_all_array</i></span><span class="cl mm" style="left:156.0px;top:650px;--ls:1.373px"><i class="o">=</i> <i class="k">Array</i><i class="o">();</i></span><span class="cl mm" style="left:19.0px;top:663px;--ls:0.678px"><i class="v">$lines</i></span><span class="cl mm" style="left:129.0px;top:663px;--ls:0.796px"><i class="o">=</i> file<i class="o">(</i><i class="s">'/opt/music_server/soundcard_cfg/<span class="sq">defaultcard</span>/default.<span class="sq">cfg</span>'</i><i class="o">);</i></span><span class="cl mm" style="left:19.0px;top:676px;--ls:0.725px"><i class="v">$channels_multi_array</i></span><span class="cl mm" style="left:166.0px;top:676px;--ls:0.832px"><i class="o">=</i> <i class="k">array_slice</i><i class="o">(</i><i class="v">$lines</i><i class="o">,</i> <i class="n">18</i><i class="o">,</i> <i class="n">1</i><i class="o">);</i></span><span class="cl mm" style="left:19.0px;top:689px;--ls:0.825px"><i class="v">$channels_multi_array</i><i class="o">[</i><i class="n">0</i><i class="o">]</i> <i class="o">=</i> substr<i class="o">(</i><i class="v">$channels_multi_array</i><i class="o">[</i><i class="n">0</i><i class="o">],</i> <i class="o">-</i><i class="n">3</i><i class="o">);</i></span><span class="cl mm" style="left:19.0px;top:702px;--ls:0.909px"><i class="v">$channels_multi_array</i><i class="o">[</i><i class="n">0</i><i class="o">]</i> <i class="o">=</i> preg_replace<i class="o">(</i><i class="s">"/\r|\n|\t/"</i><i class="o">,</i> <i class="s">""</i><i class="o">,</i> <i class="v">$channels_multi_array</i><i class="o">[</i><i class="n">0</i><i class="o">]);</i></span><span class="cl mm" style="left:3.0px;top:-1404px;--ls:0.800px"><i class="o">}</i></span><span class="cl mm" style="left:3.0px;top:-1391px;--ls:0.800px"><i class="k">if</i> <i class="o">(</i><i class="v">$zone</i> <i class="o">==</i> <i class="s">""</i><i class="o">)</i> <i class="o">{</i></span><span class="cl mm" style="left:19.0px;top:-1378px;--ls:0.800px"><i class="v">$zone</i> <i class="o">=</i> <i class="s">"0"</i><i class="o">;</i></span><span class="cl mm" style="left:3.0px;top:-1365px;--ls:0.800px"><i class="o">}</i> elseif <i class="o">(</i><i class="v">$zone</i> <i class="o">==</i> <i class="s">"all"</i><i class="o">)</i> <i class="o">{</i></span><span class="cl mm" style="left:19.0px;top:-1352px;--ls:0.800px"><i class="v">$zone</i> <i class="o">=</i> <i class="s">"1"</i><i class="o">;</i></span><span class="cl mm" style="left:3.0px;top:-1339px;--ls:0.800px"><i class="o">}</i></span><span class="cl mm" style="left:3.0px;top:-1326px;--ls:0.800px"><i class="k">if</i> <i class="o">(</i><i class="v">$zone_ext</i> <i class="o">==</i> <i class="s">""</i><i class="o">)</i> <i class="o">{</i></span><span class="cl mm" style="left:19.0px;top:715px;--ls:0.735px"><i class="k">for</i> <i class="o">(</i><i class="v">$i</i> <i class="o">=</i> <i class="n">0</i><i class="o">;</i> <i class="v">$i</i> <i class="o">&lt;</i> <i class="k">count</i><i class="o">(</i><i class="v">$channels_multi_array</i><i class="o">)</i> <i class="o">-</i> <i class="n">1</i><i class="o">;</i> <i class="v">$i</i><i class="o">++)</i> <i class="o">{</i></span><span class="cl mm" style="left:35.0px;top:728px;--ls:0.870px"><i class="v">$channels_multi_array</i><i class="o">[</i><i class="v">$i</i><i class="o">]</i> <i class="o">=</i> preg_replace<i class="o">(</i><i class="s">"/\r|\n|\t/"</i><i class="o">,</i> <i class="s">""</i><i class="o">,</i> <i class="v">$channels_multi_array</i><i class="o">[</i><i class="v">$i</i><i class="o">]);</i></span><span class="cl mm" style="left:35.0px;top:741px;--ls:0.983px"><i class="v">$lines_cards</i><i class="o">[</i><i class="v">$i</i><i class="o">]</i> <i class="o">=</i> file<i class="o">(</i><i class="s">'/opt/music_server/soundcard_cfg/soundcards/'</i> <i class="o">.</i> <i class="v">$channels_multi_array</i><i class="o">[</i><i class="v">$i</i><i class="o">]</i> <i class="o">.</i> <i class="s">'.cfg'</i><i class="o">);</i></span><span class="cl mm" style="left:35.0px;top:754px;--ls:0.694px"><i class="v">$channel_array</i><i class="o">[</i><i class="v">$i</i><i class="o">]</i>  <i class="o">=</i> <i class="k">array_slice</i><i class="o">(</i><i class="v">$lines_sc</i><i class="o">,</i> <i class="n">15</i><i class="o">,</i> <i class="n">1</i><i class="o">);</i></span><span class="cl mm" style="left:35.0px;top:767px;--ls:0.892px"><i class="v">$channel_name_array</i><i class="o">[</i><i class="v">$i</i><i class="o">]</i> <i class="o">=</i> substr<i class="o">(</i><i class="v">$channel_array</i><i class="o">[</i><i class="v">$i</i><i class="o">],</i> <i class="v">$channels_multi_array</i><i class="o">[</i><i class="v">$i</i><i class="o">]);</i></span><span class="cl mm" style="left:35.0px;top:780px;--ls:1.253px"><i class="k">if</i> <i class="o">(</i><i class="v">$channel_name_array</i><i class="o">[</i><i class="v">$i</i><i class="o">]</i> <i class="o">!=</i> <i class="s">""</i> <i class="o">&amp;&amp;</i> <i class="v">$i</i> <i class="o">&gt;</i> <i class="n">0</i><i class="o">)</i> <i class="o">{</i></span><span class="cl mm" style="left:51.0px;top:793px;--ls:1.017px"><i class="v">$channel_array</i><i class="o">[</i><i class="v">$i</i><i class="o">]</i> <i class="o">=</i> preg_replace<i class="o">(</i><i class="s">"/\r|\n/"</i><i class="o">,</i> <i class="s">""</i><i class="o">,</i> <i class="v">$channel_array</i><i class="o">[</i><i class="v">$i</i><i class="o">]);</i></span><span class="cl mm" style="left:51.0px;top:806px;--ls:0.856px"><i class="v">$channel_all_array</i><i class="o">[</i><i class="v">$i</i> <i class="o">+</i> <i class="n">1</i><i class="o">]</i> <i class="o">=</i> <i class="v">$channel_name_array</i><i class="o">[</i><i class="v">$i</i><i class="o">];</i></span><span class="cl mm" style="left:35.0px;top:819px;--ls:0.800px"><i class="o">}</i></span><span class="cl mm" style="left:19.0px;top:832px;--ls:0.800px"><i class="o">}</i></span><span class="cl mm" style="left:19.0px;top:858px;--ls:0.929px"><i class="v">$soundcard_settings</i> <i class="o">=</i> array_merge<i class="o">(</i><i class="v">$channels_multi_array</i><i class="o">,</i> <i class="v">$zones_mac_array</i><i class="o">,</i> <i class="v">$zones_int_array</i><i class="o">);</i></span><span class="cl mm" style="left:19.0px;top:884px;--ls:1.084px"><i class="v">$debug_text</i> <i class="o">=</i> <i class="s">"soundcard settings loaded: "</i> <i class="o">.</i> <i class="v">$zone</i><i class="o">;</i></span><span class="cl mm" style="left:3.0px;top:923px;--ls:0.938px"><i class="s">"/opt/music_server/log/event_debug_soundcard_settings.log"</i> <i class="o">.</i> <i class="v">$zone</i><i class="o">);</i></span></div>
<div class="abs" style="left:73px;top:125px;width:3px;height:2px;background:repeating-linear-gradient(90deg,#b8bcc0 0 2px,transparent 2px 3px);opacity:.8"></div><div class="abs" style="left:73px;top:138px;width:4px;height:2px;background:repeating-linear-gradient(90deg,#b8bcc0 0 2px,transparent 2px 3px);opacity:.8"></div><div class="abs" style="left:73px;top:161px;width:19px;height:2px;background:repeating-linear-gradient(90deg,#b8bcc0 0 2px,transparent 2px 3px);opacity:.8"></div><div class="abs" style="left:73px;top:226px;width:11px;height:2px;background:repeating-linear-gradient(90deg,#b8bcc0 0 2px,transparent 2px 3px);opacity:.8"></div><div class="abs" style="left:73px;top:263px;width:3px;height:2px;background:repeating-linear-gradient(90deg,#b8bcc0 0 2px,transparent 2px 3px);opacity:.8"></div><div class="abs" style="left:73px;top:270px;width:9px;height:2px;background:repeating-linear-gradient(90deg,#d8842a 0 2px,transparent 2px 3px);opacity:.8"></div><div class="abs" style="left:73px;top:306px;width:17px;height:2px;background:repeating-linear-gradient(90deg,#d8842a 0 2px,transparent 2px 3px);opacity:.8"></div><div class="abs" style="left:73px;top:354px;width:13px;height:2px;background:repeating-linear-gradient(90deg,#d8842a 0 2px,transparent 2px 3px);opacity:.8"></div><div class="abs" style="left:73px;top:374px;width:17px;height:2px;background:repeating-linear-gradient(90deg,#d8842a 0 2px,transparent 2px 3px);opacity:.8"></div></div>
<div class="cap" style="left:0;top:817px;width:1920px;height:18px;padding:1px 0 0 2px"><span class="capt" style="transform:scaleX(.85);margin-left:-1px">DBGp</span></div><div class="xbtn" style="left:1905px;top:821px"></div><svg class="abs" style="left:1907px;top:823px" width="8" height="7"><path d="M.8 .5 L7.200 6.500 M7.200 .5 L.8 6.500" stroke="#4a4a4a" stroke-width="1.300"/></svg><div class="btn" style="left:0px;top:838px;width:24px;height:24px"></div><div class="btn" style="left:24px;top:838px;width:24px;height:24px"></div><div class="btn" style="left:48px;top:838px;width:24px;height:24px"></div><div class="btn" style="left:72px;top:838px;width:24px;height:24px"></div><div class="btn" style="left:96px;top:838px;width:24px;height:24px"></div><div class="btn" style="left:120px;top:838px;width:25px;height:24px"></div><div class="btn" style="left:168px;top:837px;width:25px;height:25px;border-color:#e3e3e3 #4a4a4a #4a4a4a #e3e3e3;box-shadow:inset -1px -1px 0 #8a8a8a,inset 1px 1px 0 #fff"></div><div class="btn" style="left:200px;top:838px;width:25px;height:24px"></div><div class="btn" style="left:232px;top:838px;width:57px;height:24px"></div><div class="btn" style="left:296px;top:838px;width:33px;height:24px"></div><span class="t" style="left:239px;top:845px;font-size:11px;letter-spacing:-.4px">Turn OFF</span><span class="t" style="left:301px;top:845px;font-size:11px;letter-spacing:-.35px">DBG</span><svg class="abs" style="left:0px;top:836px" width="230" height="28" viewBox="0 0 230 28"><text x="6.2" y="19.300" font-family="Liberation Sans" font-size="12.500" font-weight="bold" fill="#000">{</text><text x="14.6" y="19.300" font-family="Liberation Sans" font-size="12.500" font-weight="bold" fill="#000">}</text><path d="M5 8h5.500a3 3 0 0 1 3 3v3" fill="none" stroke="#000090" stroke-width="1.300"/><path d="M10.800 13.200h5.400l-2.700 3.600z" fill="#000090"/><text x="29.3" y="19.300" font-family="Liberation Sans" font-size="12.500" font-weight="bold" fill="#000">{</text><text x="33.8" y="19.300" font-family="Liberation Sans" font-size="12.500" font-weight="bold" fill="#000">}</text><path d="M29 8h9a3 3 0 0 1 3 3v3" fill="none" stroke="#000090" stroke-width="1.300"/><path d="M38.700 13.200h5.400l-2.700 3.600z" fill="#000090"/><text x="52.3" y="19.300" font-family="Liberation Sans" font-size="12.500" font-weight="bold" fill="#000">{</text><text x="58.8" y="19.300" font-family="Liberation Sans" font-size="12.500" font-weight="bold" fill="#000">}</text><path d="M58.800 13v-2a3.800 3.800 0 0 1 7.600 0v3" fill="none" stroke="#000090" stroke-width="1.300"/><path d="M63.700 13.200h5.400l-2.700 3.600z" fill="#000090"/><path d="M78.500 8v4a2 2 0 0 0 2 2h4" fill="none" stroke="#000090" stroke-width="1.300"/><path d="M83.500 11.300v5.400l3.600-2.700z" fill="#000090"/><path d="M90.600 10.200v10.600M88.500 10.200h4.200M88.500 20.800h4.200" stroke="#000" stroke-width="1.100"/><path d="M102 12.500h7v-3.700l5.800 5.700l-5.800 5.700v-3.700h-7z" fill="#000090"/><rect x="127.700" y="10.300" width="8.300" height="8.300" fill="#000090"/><path d="M177.800 8.200h6l3.500 3.500v5.300l-3.500 3.500h-6l-3.500-3.500v-5.300z" fill="#f00000"/><rect x="205.500" y="9.500" width="15" height="12" fill="#f4f8ff" stroke="#7da2d8"/><path d="M205.500 10.500h15" stroke="#7da2d8" stroke-width="2"/><path d="M208 14l2 1l-2 1" fill="none" stroke="#000" stroke-width=".9"/></svg><div class="abs" style="left:344px;top:837px;width:145px;height:21px;border:1px solid #707070;border-radius:3px;background:linear-gradient(180deg,#f2f2f2 0,#ebebeb 50%,#dddddd 51%,#cfcfcf 100%)"></div><span class="t" style="left:348px;top:842px;font-size:12px">D:\temp\debug\event\e\</span><div class="abs" style="left:470px;top:839px;width:18px;height:17px;background:linear-gradient(180deg,#f2f2f2 0,#ebebeb 50%,#dddddd 51%,#cfcfcf 100%)"></div><svg class="abs" style="left:476px;top:845px" width="8" height="5"><path d="M0 .5h8L4 4.500Z" fill="#000"/></svg><div class="abs" style="left:1px;top:869px;width:1919px;height:16px;background:#f0f0f0;border:1px solid #8a8a8a;border-radius:2px;box-shadow:inset 1px 1px 0 #fff"></div><span class="t" style="left:7px;top:871px;font-size:12px;letter-spacing:-.15px">Breakpoints</span><svg class="abs" style="left:1886px;top:872px" width="10" height="11"><path d="M2.5 1h5v5h-5z M1 6.500h8 M5 6.500v4" stroke="#000" stroke-width="1.200" fill="none"/><path d="M6 1.500v4.500" stroke="#000" stroke-width="1.500"/></svg><div class="abs" style="left:0;top:886px;width:1920px;height:106px;background:#fff;border-top:1px solid #a0a0a0;border-left:1px solid #696969"></div><div class="abs" style="left:2px;top:888px;width:1918px;height:15px;background:linear-gradient(180deg,#fff 0,#fff 40%,#f1f2f4 45%,#eef0f3 100%);border-bottom:1px solid #d5d5d5"></div><div class="abs" style="left:26px;top:888px;width:1px;height:14px;background:#dfe3ea"></div><div class="abs" style="left:86px;top:888px;width:1px;height:14px;background:#dfe3ea"></div><div class="abs" style="left:326px;top:888px;width:1px;height:14px;background:#dfe3ea"></div><span class="t" style="left:34px;top:890px;font-size:11px;letter-spacing:-.15px">Type</span><span class="t" style="left:93px;top:890px;font-size:11px;letter-spacing:-.15px">Breakpoint data</span><span class="t" style="left:293px;top:890px;font-size:11px;letter-spacing:-.15px">Hits</span><div class="abs" style="left:6px;top:909px;width:9px;height:9px;border-radius:5px;background:#ff0000;box-shadow:0 0 0 .6px #400"></div><span class="t" style="left:35px;top:908px;font-size:11px;letter-spacing:0.00px">Line</span><span class="t" style="left:95px;top:908px;font-size:11px;letter-spacing:0.16px">D:\temp\debug\event\event.php:226</span><span class="t" style="left:295px;top:908px;font-size:11px;letter-spacing:0.00px">1</span><div class="abs" style="left:0;top:992px;width:1920px;height:1px;background:#a8a8a8"></div><div class="abs" style="left:0;top:993px;width:1920px;height:2px;background:#f0f0f0"></div><div class="abs" style="left:0;top:995px;width:1920px;height:1px;background:#000"></div><div class="abs" style="left:0;top:996px;width:1920px;height:1px;background:#fff"></div><div class="abs" style="left:0;top:997px;width:1920px;height:19px;background:#f5f2ee"></div><span class="t" style="left:31px;top:999px;font-size:11px;color:#707070;letter-spacing:-.15px">Stack</span><div class="abs" style="left:67px;top:995px;width:88px;height:20px;background:#f0f0f0;border:1px solid #000;border-top:none;border-left:none"></div><div class="abs" style="left:67px;top:1014px;width:88px;height:1px;background:#000"></div><span class="t" style="left:94px;top:999px;font-size:11px;letter-spacing:-.2px">Breakpoints</span><div class="abs" style="left:0;top:1017px;width:1920px;height:1px;background:#a0a0a0"></div><div class="abs" style="left:0;top:1018px;width:1920px;height:22px;background:#f1eded"></div><div class="abs" style="left:1179px;top:1020px;width:1px;height:18px;background:#d2cfcf"></div><div class="abs" style="left:1180px;top:1020px;width:1px;height:18px;background:#fff"></div><div class="abs" style="left:1378px;top:1020px;width:1px;height:18px;background:#d2cfcf"></div><div class="abs" style="left:1379px;top:1020px;width:1px;height:18px;background:#fff"></div><div class="abs" style="left:1638px;top:1020px;width:1px;height:18px;background:#d2cfcf"></div><div class="abs" style="left:1639px;top:1020px;width:1px;height:18px;background:#fff"></div><div class="abs" style="left:1748px;top:1020px;width:1px;height:18px;background:#d2cfcf"></div><div class="abs" style="left:1749px;top:1020px;width:1px;height:18px;background:#fff"></div><div class="abs" style="left:1868px;top:1020px;width:1px;height:18px;background:#d2cfcf"></div><div class="abs" style="left:1869px;top:1020px;width:1px;height:18px;background:#fff"></div><div class="abs" style="left:1898px;top:1020px;width:1px;height:18px;background:#d2cfcf"></div><div class="abs" style="left:1899px;top:1020px;width:1px;height:18px;background:#fff"></div><span class="t" style="left:2px;top:1024px;font-size:12px;letter-spacing:-.22px">PHP Hypertext Preprocessor file</span><span class="t" style="left:1184px;top:1024px;font-size:12px;letter-spacing:-.22px">length : 24800   lines : 657</span><span class="t" style="left:1384px;top:1024px;font-size:12px;letter-spacing:-.22px">Ln : 226   Col : 1   Sel : 0 | 0</span><span class="t" style="left:1644px;top:1024px;font-size:12px;letter-spacing:-.22px">UNIX</span><span class="t" style="left:1754px;top:1024px;font-size:12px;letter-spacing:-.22px">ANSI as UTF-8</span><span class="t" style="left:1873px;top:1024px;font-size:12px;letter-spacing:-.22px">INS</span><div class="abs" id="task" style="left:0;top:1040px;width:1920px;height:40px;overflow:hidden;background:linear-gradient(90deg,#1b5898 0,#2576b6 60px,#2f88c6 120px,#3d9ad3 200px,#4ba9dc 330px,#4aa6dc 560px,#3c9ad6 700px,#3391d0 850px,#2b82ca 1000px,#2374bf 1200px,#2069b5 1400px,#1c5fa8 1600px,#1a5597 1650px,#17497f 1690px,#17497f 1920px)"><div class="abs" style="left:0;top:0;width:1920px;height:1px;background:#1c3a5e"></div><div class="abs" style="left:0;top:1px;width:1920px;height:1px;background:rgba(255,255,255,.35)"></div><div class="abs" style="left:150px;top:-30px;width:90px;height:120px;background:rgba(120,190,240,.25);transform:skewX(40deg);filter:blur(6px)"></div><div class="abs" style="left:1290px;top:0;width:110px;height:40px;background:rgba(170,215,250,.7);clip-path:polygon(14px 0,30px 0,52px 15px,92px 40px,76px 40px,42px 18px);filter:blur(1.500px)"></div><div class="abs" style="left:700px;top:-10px;width:380px;height:60px;background:linear-gradient(180deg,rgba(255,255,255,.14),rgba(255,255,255,0));clip-path:polygon(60%% 0,100%% 0,20%% 100%%,0 100%%);filter:blur(4px)"></div><div class="abs" style="left:122px;top:1px;width:58px;height:39px;border:1px solid rgba(20,50,90,.75);border-radius:3px;box-shadow:inset 0 0 0 1px rgba(255,255,255,.5);background:linear-gradient(180deg,rgba(255,255,255,.40) 0,rgba(255,255,255,.25) 45%,rgba(255,255,255,.12) 50%,rgba(255,255,255,.22) 100%)"></div><div class="abs" style="left:246px;top:1px;width:58px;height:39px;border:1px solid rgba(20,50,90,.75);border-radius:3px;box-shadow:inset 0 0 0 1px rgba(255,255,255,.5);background:linear-gradient(180deg,rgba(255,255,255,.40) 0,rgba(255,255,255,.25) 45%,rgba(255,255,255,.12) 50%,rgba(255,255,255,.22) 100%)"></div><div class="abs" style="left:370px;top:1px;width:58px;height:39px;border:1px solid rgba(20,50,90,.75);border-radius:3px;box-shadow:inset 0 0 0 1px rgba(255,255,255,.5);background:linear-gradient(180deg,rgba(255,255,255,.40) 0,rgba(255,255,255,.25) 45%,rgba(255,255,255,.12) 50%,rgba(255,255,255,.22) 100%)"></div><div class="abs" style="left:432px;top:1px;width:58px;height:39px;border:1px solid rgba(20,50,90,.75);border-radius:3px;box-shadow:inset 0 0 0 1px rgba(255,255,255,.5);background:linear-gradient(180deg,rgba(255,255,255,.62) 0,rgba(255,255,255,.45) 45%,rgba(255,255,255,.30) 50%,rgba(255,255,255,.42) 100%)"></div><div class="abs" style="left:494px;top:1px;width:58px;height:39px;border:1px solid rgba(20,50,90,.75);border-radius:3px;box-shadow:inset 0 0 0 1px rgba(255,255,255,.5);background:linear-gradient(180deg,rgba(255,255,255,.40) 0,rgba(255,255,255,.25) 45%,rgba(255,255,255,.12) 50%,rgba(255,255,255,.22) 100%)"></div><div class="abs" style="left:10px;top:3px;width:35px;height:35px;border-radius:18px;background:radial-gradient(ellipse 60% 40% at 50% 100%,#18d8f8 0,rgba(24,216,248,0) 100%),linear-gradient(180deg,#c8d4de 0,#8aa6be 30%,#6a90b2 47%,#0f5f9e 50%,#1476b8 70%,#1a8cd0 100%);box-shadow:0 0 0 1px rgba(190,215,240,.7),0 0 0 2px rgba(10,50,90,.6)"></div><svg class="abs" style="left:15px;top:9px" width="25" height="24" viewBox="0 0 25 24"><g transform="scale(.93)"><path d="M4.500 3.500q4.500-2.500 9.500-.5l-1.500 8.500q-4.500-1.500-9.500.5z" fill="#e8501f"/><path d="M15 4q5 2 10 0l-1.500 8.500q-5 2-10 0z" fill="#7ab83a"/><path d="M2.500 13.500q4.500-2.500 9.500-.5l-1.500 8.500q-4.500-1.500-9.500.5z" fill="#2a8fe0"/><path d="M13 14.500q5 2 10 0l-1.500 8.500q-5 2-10 0z" fill="#fbb820"/></g></svg><svg class="abs" style="left:72px;top:4px" width="36" height="36" viewBox="0 0 36 36"><path d="M31.500 17.500a13 13.500 0 1 0-2.500 8h-7.500a6.500 7 0 0 1-9.300-3.500h19a13 13 0 0 0 .3-4.500z M12 14.500a6.500 7 0 0 1 12.600 0z" fill="#45bcf2" stroke="#1a86d4" stroke-width=".8" fill-rule="evenodd"/><path d="M4.500 30c-5-5 3.500-18.500 14-24.500s15.500-3 12 3.500" fill="none" stroke="#f8c010" stroke-width="2.600" stroke-linecap="round"/><path d="M4.800 29c-4-5 4-17.500 14-23.200" fill="none" stroke="#fde070" stroke-width="1" stroke-linecap="round"/></svg><svg class="abs" style="left:136px;top:6px" width="32" height="30" viewBox="0 0 32 30"><path d="M1 6h9l2 2.500h17v18h-28z" fill="#f0d078" stroke="#c8a040"/><rect x="5" y="3" width="7" height="4" fill="#3da32e"/><rect x="12" y="5" width="7" height="4" fill="#d83020"/><rect x="19" y="7" width="7" height="4" fill="#2f8de8"/><path d="M1 11h28v16h-28z" fill="#f7e4a0" stroke="#c8a040"/><path d="M5 19h18v8h-18z" fill="#a8d4f4" stroke="#e8f4ff"/><rect x="8" y="23" width="12" height="5" fill="#5fa8e0"/></svg><svg class="abs" style="left:198px;top:8px" width="30" height="28" viewBox="0 0 30 28"><rect x="8" y="3" width="19" height="21" fill="#7db4e4" opacity=".6"/><rect x="4" y="2" width="19" height="22" fill="#8cc0ea" opacity=".8"/><rect x="1" y="1" width="19" height="23" fill="#5fa4dc" stroke="#9ccaf0"/><circle cx="11" cy="13" r="8" fill="#f07818" stroke="#f8a860"/><path d="M8 8.500l8 4.500l-8 4.500z" fill="#fff"/></svg><svg class="abs" style="left:260px;top:5px" width="30" height="30" viewBox="0 0 30 30"><circle cx="15" cy="15" r="14" fill="#e0483c"/><path d="M15 15L2.900 8A14 14 0 0 0 8 27.100z" fill="#3aa757"/><path d="M15 15L2.900 8A14 14 0 0 0 8 27.100L15 29z" fill="#3aa757"/><path d="M15 15L8 27.100A14 14 0 0 0 27.100 8H15z" fill="#fbc116"/><path d="M15 15L2.900 8A14 14 0 0 1 27.100 8z" fill="#e0483c"/><path d="M15 15L2.900 8A14 14 0 0 0 8 27.100z" fill="#3aa757"/><circle cx="15" cy="15" r="6.500" fill="#f4f4f4"/><circle cx="15" cy="15" r="5.200" fill="#4a8af4"/></svg><svg class="abs" style="left:321px;top:4px" width="32" height="32" viewBox="0 0 32 32"><defs><radialGradient id="ffg" cx="45%" cy="15%" r="90%"><stop offset="0" stop-color="#52c0f4"/><stop offset=".45" stop-color="#1a78c8"/><stop offset="1" stop-color="#0a2f7a"/></radialGradient><linearGradient id="ffo" x1="0" y1="0" x2="1" y2="1"><stop offset="0" stop-color="#f08a20"/><stop offset=".6" stop-color="#e8601c"/><stop offset="1" stop-color="#d83818"/></linearGradient></defs><path d="M3.800 4.500l2.400 2.700c2-1.500 4.500-2 6.500-1.900l3 4.700l-3 2l.3 2.500l-2.200 2.200c2 2 5 1.800 7.800 1.500l-5.600 3.300c4 2.500 8.500 1.500 11-1.500c1.500-3 2-8-1-14c4 3.500 5.500 8 4.800 12.500c-1 6.500-6.500 11-12.800 10.500S1.500 23 1.500 16.500c0-4 .8-8.500 2.300-12z" fill="url(#ffo)"/><path d="M6.200 7.200c2-1.500 4.500-2 6.500-1.900l3 4.700l-3 2l.3 2.500l-2.200 2.200c2 2 5 1.800 7.800 1.500l-5.600 3.300c4 2.500 8.500 1.500 11-1.500c1.500-3 2-8-1-14c-2.500-2.700-6-4-9.500-3.600s-6 2.300-7.300 4.800z" fill="url(#ffg)"/><path d="M24 5.800c3.500 3.500 4.500 9.500 2 14.500c3-3.500 3.500-10-2-14.500z" fill="#fde030"/><path d="M23 5c1.500 1.500 2.500 4 2.500 7c.8-3-.5-5.500-2.500-7z" fill="#fff8e0"/></svg><svg class="abs" style="left:381px;top:6px" width="36" height="32" viewBox="0 0 36 32"><path d="M2 2h11l-3.500 3.500l5 5l-4 4l-5-5L2 13z" fill="#1f6fe0"/><path d="M34 30h-11l3.500-3.500l-5-5l4-4l5 5l3.500-3.500z" fill="#1fb02a"/><path d="M12 14v-5a5.500 5.500 0 0 1 11 0v5" fill="none" stroke="#6a6a6a" stroke-width="3"/><rect x="8.500" y="13" width="18" height="14" rx="1.500" fill="#8a8a8a" stroke="#4a4a4a"/><path d="M13 13v14M18 13v14M22 13v14" stroke="#6a6a6a" stroke-width="1.500"/></svg><svg class="abs" style="left:445px;top:6px" width="34" height="32" viewBox="0 0 34 32"><path d="M1.500 1.500h19l5 5v24h-24z" fill="#fcfcfc" stroke="#6a6a6a"/><path d="M2 14h23v16h-23z" fill="#6cc030"/><path d="M2 22h23v8h-23z" fill="#4fa818"/><path d="M2.500 3.500h17" stroke="#aaa" stroke-dasharray="1 1"/><text x="6" y="18" font-family="Liberation Sans" font-size="10" font-weight="bold" fill="#111">n++</text><path d="M18 24L28 4l3 1.500L21 25.500l-3.500 1.500z" fill="#f0a828" stroke="#8a5a10" stroke-width=".7"/><path d="M28 4l3 1.500l1-2l-3-1.500z" fill="#c83030"/></svg><svg class="abs" style="left:504px;top:3px" width="38" height="38" viewBox="0 0 38 38"><g transform="scale(1.120)"><path d="M10 4l3 3l5-1l3-3l2 1l-1 5l2 5l7 1v4l-3 1l2 3h-4l-4-3l-1 5l3 4h-8l-1-6l-5 3l-3-1l2-4l-5-1v-4l6-1l2-5l-3-2z" fill="#f80010"/><path d="M11 7l5 .5l-1 2.500l-4-1z" fill="#111"/></g></svg><span class="t" style="left:1682px;top:12px;font-size:12px;color:#fff;letter-spacing:-.7px">DE</span><svg class="abs" style="left:1712px;top:18px" width="9" height="6"><path d="M0 5.500 L4.500 .5 L9 5.500Z" fill="#fff"/></svg><svg class="abs" style="left:1733px;top:11px" width="90" height="20"><path d="M2 2v16" stroke="#fff" stroke-width="1.6"/><path d="M3 3h6v2h4v6h-6v-2h-4z" fill="#fff"/><rect x="26.500" y="6.500" width="8" height="10" fill="none" stroke="#fff" stroke-width="1.600"/><path d="M28 4v3M33 4v3M35 9h3v5h-3" stroke="#fff" stroke-width="1.400" fill="none"/><path d="M50 16v-2M53 16v-4M56 16v-7M59 16v-10M62 16v-13" stroke="#fff" stroke-width="1.800"/><path d="M76 8h3l4-4v13l-4-4h-3z" fill="#fff"/><path d="M86 7q2 3.500 0 7" stroke="#fff" stroke-width="1.200" fill="none"/></svg><span class="t" style="left:1853px;top:7px;font-size:12px;color:#fff;letter-spacing:-.4px">18:07</span><span class="t" style="left:1840px;top:24px;font-size:12px;color:#fff;letter-spacing:-.6px">26.10.2017</span><div class="abs" style="left:1906px;top:1px;width:14px;height:39px;border-left:1px solid rgba(10,30,60,.8);box-shadow:inset 1px 0 0 rgba(255,255,255,.4);background:linear-gradient(90deg,rgba(255,255,255,.25),rgba(255,255,255,.05))"></div></div>
<div id="watch" class="abs" style="left:1057px;top:121px;width:491px;height:861px;border:1px solid #1d2429;border-radius:3px 3px 1px 1px;box-shadow:3px 4px 16px 4px rgba(0,0,0,.6),0 0 4px 1px rgba(0,0,0,.55);background:linear-gradient(90deg,#6a737b 0,#8e979f 20px,#87919a 70px,#707a84 140px,#4a5560 250px,#3e4953 330px,#3f4a54 383px,#7f8d9a 392px,#c3d6e8 398px,#c3d6e8 411px,#8d9dab 418px,#8797a5 470px,#8fa0ae 490px)">
<div class="abs" style="left:0;top:0;width:489px;height:859px;border:1px solid rgba(255,255,255,.55);border-radius:2px 2px 1px 1px"></div><div class="abs" style="left:1px;top:22px;width:4px;height:837px;background:linear-gradient(180deg,#6c757d 0,#2c3438 8%,#2a3236 79%,#9aa6b2 80.500%,#c6def5 82%,#bcdaf8 100%)"></div><div class="abs" style="left:1px;top:22px;width:1px;height:837px;background:rgba(255,255,255,.35)"></div><div class="abs" style="left:484px;top:22px;width:5px;height:837px;background:linear-gradient(180deg,#97a6b4 0,#6a737b 12%,#5a6268 44%,#59462f 46.500%,#59462f 71%,#5a6066 72.500%,#5c646a 79%,#b4bec8 80.500%,#cfe0f2 82%,#c3dbf4 100%)"></div><div class="abs" style="left:486px;top:22px;width:1px;height:837px;background:rgba(255,255,255,.4)"></div><div class="abs" style="left:1px;top:855px;width:488px;height:4px;background:linear-gradient(180deg,#c3dcf6,#b4d4f4)"></div><span class="t" style="left:7px;top:6px;font-size:12px;letter-spacing:-.2px;color:#000;text-shadow:0 0 5px rgba(255,255,255,.9),0 0 8px rgba(255,255,255,.7)">Watches</span><div class="abs" style="left:468px;top:5px;width:16px;height:16px;border:1px solid #5a2a22;border-radius:3px;box-shadow:inset 0 0 0 1px rgba(255,255,255,.45);background:linear-gradient(180deg,#e8a090 0,#d8705a 45%,#c2402a 50%,#cf6a50 100%)"></div><svg class="abs" style="left:472px;top:9px" width="8" height="8"><path d="M1.500 1.500l5 5M6.500 1.500l-5 5" stroke="#3a3a4a" stroke-width="3"/><path d="M1.500 1.500l5 5M6.500 1.500l-5 5" stroke="#fff" stroke-width="1.500"/></svg><div class="abs" style="left:5px;top:23px;width:481px;height:832px;background:#f5f2ee;border:1px solid #23282c;box-shadow:0 0 0 1px rgba(255,255,255,.35)"></div><div class="abs" style="left:7px;top:25px;width:477px;height:804px;background:#fff;border:1px solid #a8acb0;border-top-color:#8a8e92"></div><div class="abs" style="left:8px;top:27px;width:475px;height:16px;background:linear-gradient(180deg,#fff 0,#fff 40%,#f2f3f5 45%,#eff0f3 100%);border-bottom:1px solid #d5d5d5"></div><div class="abs" style="left:210px;top:27px;width:1px;height:15px;background:#dde1e8"></div><div class="abs" style="left:360px;top:27px;width:1px;height:15px;background:#dde1e8"></div><div class="abs" style="left:400px;top:27px;width:1px;height:15px;background:#dde1e8"></div><span class="t" style="left:15px;top:31px;font-size:11px;color:#000">Name</span><span class="t" style="left:217px;top:31px;font-size:11px;color:#000">Value</span><span class="t" style="left:367px;top:31px;font-size:11px;color:#000">Type</span><svg class="abs" style="left:53px;top:33px" width="9" height="5"><path d="M0 5L4.500 0L9 5Z" fill="#a8a8a8"/></svg><div class="abs" style="left:23px;top:53px;width:5px;height:1px;background:repeating-linear-gradient(90deg,#a0a0a0 0 1px,transparent 1px 2px)"></div><div class="abs" style="left:13px;top:49px;width:9px;height:9px;border:1px solid #919191;border-radius:1px;background:linear-gradient(135deg,#fff,#e0e0e0)"></div><div class="abs" style="left:15px;top:53px;width:5px;height:1px;background:#2b4fb8"></div><span class="t tr" style="left:36px;top:48px">$configzone</span><span class="t tr" style="left:369px;top:48px">array</span><div class="abs" style="left:36px;top:62px;width:1px;height:10px;background:repeating-linear-gradient(180deg,#a0a0a0 0 1px,transparent 1px 2px)"></div><div class="abs" style="left:37px;top:71px;width:9px;height:1px;background:repeating-linear-gradient(90deg,#a0a0a0 0 1px,transparent 1px 2px)"></div><span class="t tr" style="left:54px;top:66px">0</span><span class="t tr" style="left:219px;top:66px">0</span><span class="t tr" style="left:369px;top:66px">bool</span><div class="abs" style="left:36px;top:71px;width:1px;height:15px;background:repeating-linear-gradient(180deg,#a0a0a0 0 1px,transparent 1px 2px)"></div><div class="abs" style="left:41px;top:89px;width:5px;height:1px;background:repeating-linear-gradient(90deg,#a0a0a0 0 1px,transparent 1px 2px)"></div><div class="abs" style="left:31px;top:85px;width:9px;height:9px;border:1px solid #919191;border-radius:1px;background:linear-gradient(135deg,#fff,#e0e0e0)"></div><div class="abs" style="left:33px;top:89px;width:5px;height:1px;background:#2b4fb8"></div><span class="t tr" style="left:54px;top:84px">1</span><span class="t tr" style="left:369px;top:84px">array</span><div class="abs" style="left:54px;top:98px;width:1px;height:6px;background:repeating-linear-gradient(180deg,#a0a0a0 0 1px,transparent 1px 2px)"></div><div class="abs" style="left:59px;top:107px;width:5px;height:1px;background:repeating-linear-gradient(90deg,#a0a0a0 0 1px,transparent 1px 2px)"></div><div class="abs" style="left:49px;top:103px;width:9px;height:9px;border:1px solid #919191;border-radius:1px;background:linear-gradient(135deg,#fff,#e0e0e0)"></div><div class="abs" style="left:51px;top:107px;width:5px;height:1px;background:#2b4fb8"></div><div class="abs" style="left:53px;top:105px;width:1px;height:5px;background:#2b4fb8"></div><span class="t tr" style="left:71px;top:102px">LOX_VI_AMP</span><span class="t tr" style="left:369px;top:102px">array</span><div class="abs" style="left:54px;top:112px;width:1px;height:10px;background:repeating-linear-gradient(180deg,#a0a0a0 0 1px,transparent 1px 2px)"></div><div class="abs" style="left:59px;top:125px;width:5px;height:1px;background:repeating-linear-gradient(90deg,#a0a0a0 0 1px,transparent 1px 2px)"></div><div class="abs" style="left:49px;top:121px;width:9px;height:9px;border:1px solid #919191;border-radius:1px;background:linear-gradient(135deg,#fff,#e0e0e0)"></div><div class="abs" style="left:51px;top:125px;width:5px;height:1px;background:#2b4fb8"></div><div class="abs" style="left:53px;top:123px;width:1px;height:5px;background:#2b4fb8"></div><span class="t tr" style="left:71px;top:120px">LOX_VI_POWER</span><span class="t tr" style="left:369px;top:120px">array</span><div class="abs" style="left:54px;top:130px;width:1px;height:10px;background:repeating-linear-gradient(180deg,#a0a0a0 0 1px,transparent 1px 2px)"></div><div class="abs" style="left:59px;top:143px;width:5px;height:1px;background:repeating-linear-gradient(90deg,#a0a0a0 0 1px,transparent 1px 2px)"></div><div class="abs" style="left:49px;top:139px;width:9px;height:9px;border:1px solid #919191;border-radius:1px;background:linear-gradient(135deg,#fff,#e0e0e0)"></div><div class="abs" style="left:51px;top:143px;width:5px;height:1px;background:#2b4fb8"></div><div class="abs" style="left:53px;top:141px;width:1px;height:5px;background:#2b4fb8"></div><span class="t tr" style="left:71px;top:138px">LOX_VI_VOLUME</span><span class="t tr" style="left:369px;top:138px">array</span><div class="abs" style="left:54px;top:148px;width:1px;height:10px;background:repeating-linear-gradient(180deg,#a0a0a0 0 1px,transparent 1px 2px)"></div><div class="abs" style="left:59px;top:161px;width:5px;height:1px;background:repeating-linear-gradient(90deg,#a0a0a0 0 1px,transparent 1px 2px)"></div><div class="abs" style="left:49px;top:157px;width:9px;height:9px;border:1px solid #919191;border-radius:1px;background:linear-gradient(135deg,#fff,#e0e0e0)"></div><div class="abs" style="left:51px;top:161px;width:5px;height:1px;background:#2b4fb8"></div><div class="abs" style="left:53px;top:159px;width:1px;height:5px;background:#2b4fb8"></div><span class="t tr" style="left:71px;top:156px">LOX_VTI_MODE</span><span class="t tr" style="left:369px;top:156px">array</span><div class="abs" style="left:54px;top:166px;width:1px;height:10px;background:repeating-linear-gradient(180deg,#a0a0a0 0 1px,transparent 1px 2px)"></div><div class="abs" style="left:59px;top:179px;width:5px;height:1px;background:repeating-linear-gradient(90deg,#a0a0a0 0 1px,transparent 1px 2px)"></div><div class="abs" style="left:49px;top:175px;width:9px;height:9px;border:1px solid #919191;border-radius:1px;background:linear-gradient(135deg,#fff,#e0e0e0)"></div><div class="abs" style="left:51px;top:179px;width:5px;height:1px;background:#2b4fb8"></div><div class="abs" style="left:53px;top:177px;width:1px;height:5px;background:#2b4fb8"></div><span class="t tr" style="left:71px;top:174px">LOX_VTI_SYNC</span><span class="t tr" style="left:369px;top:174px">array</span><div class="abs" style="left:54px;top:184px;width:1px;height:10px;background:repeating-linear-gradient(180deg,#a0a0a0 0 1px,transparent 1px 2px)"></div><div class="abs" style="left:59px;top:197px;width:5px;height:1px;background:repeating-linear-gradient(90deg,#a0a0a0 0 1px,transparent 1px 2px)"></div><div class="abs" style="left:49px;top:193px;width:9px;height:9px;border:1px solid #919191;border-radius:1px;background:linear-gradient(135deg,#fff,#e0e0e0)"></div><div class="abs" style="left:51px;top:197px;width:5px;height:1px;background:#2b4fb8"></div><div class="abs" style="left:53px;top:195px;width:1px;height:5px;background:#2b4fb8"></div><span class="t tr" style="left:71px;top:192px">LOX_VTI_TIME</span><span class="t tr" style="left:369px;top:192px">array</span><div class="abs" style="left:54px;top:202px;width:1px;height:10px;background:repeating-linear-gradient(180deg,#a0a0a0 0 1px,transparent 1px 2px)"></div><div class="abs" style="left:59px;top:215px;width:5px;height:1px;background:repeating-linear-gradient(90deg,#a0a0a0 0 1px,transparent 1px 2px)"></div><div class="abs" style="left:49px;top:211px;width:9px;height:9px;border:1px solid #919191;border-radius:1px;background:linear-gradient(135deg,#fff,#e0e0e0)"></div><div class="abs" style="left:51px;top:215px;width:5px;height:1px;background:#2b4fb8"></div><div class="abs" style="left:53px;top:213px;width:1px;height:5px;background:#2b4fb8"></div><span class="t tr" style="left:71px;top:210px">LOX_VTI_TITLE</span><span class="t tr" style="left:369px;top:210px">array</span><div class="abs" style="left:54px;top:220px;width:1px;height:10px;background:repeating-linear-gradient(180deg,#a0a0a0 0 1px,transparent 1px 2px)"></div><div class="abs" style="left:59px;top:233px;width:5px;height:1px;background:repeating-linear-gradient(90deg,#a0a0a0 0 1px,transparent 1px 2px)"></div><div class="abs" style="left:49px;top:229px;width:9px;height:9px;border:1px solid #919191;border-radius:1px;background:linear-gradient(135deg,#fff,#e0e0e0)"></div><div class="abs" style="left:51px;top:233px;width:5px;height:1px;background:#2b4fb8"></div><div class="abs" style="left:53px;top:231px;width:1px;height:5px;background:#2b4fb8"></div><span class="t tr" style="left:71px;top:228px">LOX_VTI_TITLE_TIME</span><span class="t tr" style="left:369px;top:228px">array</span><div class="abs" style="left:54px;top:238px;width:1px;height:10px;background:repeating-linear-gradient(180deg,#a0a0a0 0 1px,transparent 1px 2px)"></div><div class="abs" style="left:59px;top:251px;width:5px;height:1px;background:repeating-linear-gradient(90deg,#a0a0a0 0 1px,transparent 1px 2px)"></div><div class="abs" style="left:49px;top:247px;width:9px;height:9px;border:1px solid #919191;border-radius:1px;background:linear-gradient(135deg,#fff,#e0e0e0)"></div><div class="abs" style="left:51px;top:251px;width:5px;height:1px;background:#2b4fb8"></div><div class="abs" style="left:53px;top:249px;width:1px;height:5px;background:#2b4fb8"></div><span class="t tr" style="left:71px;top:246px">SLM_ALSA_PARAMS</span><span class="t tr" style="left:369px;top:246px">array</span><div class="abs" style="left:54px;top:256px;width:1px;height:10px;background:repeating-linear-gradient(180deg,#a0a0a0 0 1px,transparent 1px 2px)"></div><div class="abs" style="left:59px;top:269px;width:5px;height:1px;background:repeating-linear-gradient(90deg,#a0a0a0 0 1px,transparent 1px 2px)"></div><div class="abs" style="left:49px;top:265px;width:9px;height:9px;border:1px solid #919191;border-radius:1px;background:linear-gradient(135deg,#fff,#e0e0e0)"></div><div class="abs" style="left:51px;top:269px;width:5px;height:1px;background:#2b4fb8"></div><div class="abs" style="left:53px;top:267px;width:1px;height:5px;background:#2b4fb8"></div><span class="t tr" style="left:71px;top:264px">SLM_AUTOSTART</span><span class="t tr" style="left:369px;top:264px">array</span><div class="abs" style="left:54px;top:274px;width:1px;height:10px;background:repeating-linear-gradient(180deg,#a0a0a0 0 1px,transparent 1px 2px)"></div><div class="abs" style="left:59px;top:287px;width:5px;height:1px;background:repeating-linear-gradient(90deg,#a0a0a0 0 1px,transparent 1px 2px)"></div><div class="abs" style="left:49px;top:283px;width:9px;height:9px;border:1px solid #919191;border-radius:1px;background:linear-gradient(135deg,#fff,#e0e0e0)"></div><div class="abs" style="left:51px;top:287px;width:5px;height:1px;background:#2b4fb8"></div><span class="t tr" style="left:71px;top:282px">SLM_MAC_ADDRESS</span><span class="t tr" style="left:369px;top:282px">array</span><div class="abs" style="left:72px;top:296px;width:1px;height:10px;background:repeating-linear-gradient(180deg,#a0a0a0 0 1px,transparent 1px 2px)"></div><div class="abs" style="left:73px;top:305px;width:9px;height:1px;background:repeating-linear-gradient(90deg,#a0a0a0 0 1px,transparent 1px 2px)"></div><span class="t tr" style="left:89px;top:300px">1</span><span class="t tr" style="left:219px;top:300px">aa:bb:cc:dd:ee:01</span><span class="t tr" style="left:369px;top:300px">string</span><div class="abs" style="left:54px;top:292px;width:1px;height:28px;background:repeating-linear-gradient(180deg,#a0a0a0 0 1px,transparent 1px 2px)"></div><div class="abs" style="left:59px;top:323px;width:5px;height:1px;background:repeating-linear-gradient(90deg,#a0a0a0 0 1px,transparent 1px 2px)"></div><div class="abs" style="left:49px;top:319px;width:9px;height:9px;border:1px solid #919191;border-radius:1px;background:linear-gradient(135deg,#fff,#e0e0e0)"></div><div class="abs" style="left:51px;top:323px;width:5px;height:1px;background:#2b4fb8"></div><div class="abs" style="left:53px;top:321px;width:1px;height:5px;background:#2b4fb8"></div><span class="t tr" style="left:71px;top:318px">SLM_NAME</span><span class="t tr" style="left:369px;top:318px">array</span><div class="abs" style="left:54px;top:328px;width:1px;height:10px;background:repeating-linear-gradient(180deg,#a0a0a0 0 1px,transparent 1px 2px)"></div><div class="abs" style="left:59px;top:341px;width:5px;height:1px;background:repeating-linear-gradient(90deg,#a0a0a0 0 1px,transparent 1px 2px)"></div><div class="abs" style="left:49px;top:337px;width:9px;height:9px;border:1px solid #919191;border-radius:1px;background:linear-gradient(135deg,#fff,#e0e0e0)"></div><div class="abs" style="left:51px;top:341px;width:5px;height:1px;background:#2b4fb8"></div><div class="abs" style="left:53px;top:339px;width:1px;height:5px;background:#2b4fb8"></div><span class="t tr" style="left:71px;top:336px">SLM_SOUNDCARD</span><span class="t tr" style="left:369px;top:336px">array</span><div class="abs" style="left:54px;top:346px;width:1px;height:10px;background:repeating-linear-gradient(180deg,#a0a0a0 0 1px,transparent 1px 2px)"></div><div class="abs" style="left:59px;top:359px;width:5px;height:1px;background:repeating-linear-gradient(90deg,#a0a0a0 0 1px,transparent 1px 2px)"></div><div class="abs" style="left:49px;top:355px;width:9px;height:9px;border:1px solid #919191;border-radius:1px;background:linear-gradient(135deg,#fff,#e0e0e0)"></div><div class="abs" style="left:51px;top:359px;width:5px;height:1px;background:#2b4fb8"></div><div class="abs" style="left:53px;top:357px;width:1px;height:5px;background:#2b4fb8"></div><span class="t tr" style="left:71px;top:354px">SQ2LOX_DATEN</span><span class="t tr" style="left:369px;top:354px">array</span><div class="abs" style="left:36px;top:94px;width:1px;height:280px;background:repeating-linear-gradient(180deg,#a0a0a0 0 1px,transparent 1px 2px)"></div><div class="abs" style="left:41px;top:377px;width:5px;height:1px;background:repeating-linear-gradient(90deg,#a0a0a0 0 1px,transparent 1px 2px)"></div><div class="abs" style="left:31px;top:373px;width:9px;height:9px;border:1px solid #919191;border-radius:1px;background:linear-gradient(135deg,#fff,#e0e0e0)"></div><div class="abs" style="left:33px;top:377px;width:5px;height:1px;background:#2b4fb8"></div><div class="abs" style="left:35px;top:375px;width:1px;height:5px;background:#2b4fb8"></div><span class="t tr" style="left:54px;top:372px">2</span><span class="t tr" style="left:369px;top:372px">array</span><div class="abs" style="left:36px;top:382px;width:1px;height:10px;background:repeating-linear-gradient(180deg,#a0a0a0 0 1px,transparent 1px 2px)"></div><div class="abs" style="left:41px;top:395px;width:5px;height:1px;background:repeating-linear-gradient(90deg,#a0a0a0 0 1px,transparent 1px 2px)"></div><div class="abs" style="left:31px;top:391px;width:9px;height:9px;border:1px solid #919191;border-radius:1px;background:linear-gradient(135deg,#fff,#e0e0e0)"></div><div class="abs" style="left:33px;top:395px;width:5px;height:1px;background:#2b4fb8"></div><div class="abs" style="left:35px;top:393px;width:1px;height:5px;background:#2b4fb8"></div><span class="t tr" style="left:54px;top:390px">3</span><span class="t tr" style="left:369px;top:390px">array</span><div class="abs" style="left:36px;top:400px;width:1px;height:10px;background:repeating-linear-gradient(180deg,#a0a0a0 0 1px,transparent 1px 2px)"></div><div class="abs" style="left:41px;top:413px;width:5px;height:1px;background:repeating-linear-gradient(90deg,#a0a0a0 0 1px,transparent 1px 2px)"></div><div class="abs" style="left:31px;top:409px;width:9px;height:9px;border:1px solid #919191;border-radius:1px;background:linear-gradient(135deg,#fff,#e0e0e0)"></div><div class="abs" style="left:33px;top:413px;width:5px;height:1px;background:#2b4fb8"></div><span class="t tr" style="left:54px;top:408px">4</span><span class="t tr" style="left:369px;top:408px">array</span><div class="abs" style="left:54px;top:422px;width:1px;height:6px;background:repeating-linear-gradient(180deg,#a0a0a0 0 1px,transparent 1px 2px)"></div><div class="abs" style="left:59px;top:431px;width:5px;height:1px;background:repeating-linear-gradient(90deg,#a0a0a0 0 1px,transparent 1px 2px)"></div><div class="abs" style="left:49px;top:427px;width:9px;height:9px;border:1px solid #919191;border-radius:1px;background:linear-gradient(135deg,#fff,#e0e0e0)"></div><div class="abs" style="left:51px;top:431px;width:5px;height:1px;background:#2b4fb8"></div><div class="abs" style="left:53px;top:429px;width:1px;height:5px;background:#2b4fb8"></div><span class="t tr" style="left:71px;top:426px">LOX_VI_AMP</span><span class="t tr" style="left:369px;top:426px">array</span><div class="abs" style="left:54px;top:436px;width:1px;height:10px;background:repeating-linear-gradient(180deg,#a0a0a0 0 1px,transparent 1px 2px)"></div><div class="abs" style="left:59px;top:449px;width:5px;height:1px;background:repeating-linear-gradient(90deg,#a0a0a0 0 1px,transparent 1px 2px)"></div><div class="abs" style="left:49px;top:445px;width:9px;height:9px;border:1px solid #919191;border-radius:1px;background:linear-gradient(135deg,#fff,#e0e0e0)"></div><div class="abs" style="left:51px;top:449px;width:5px;height:1px;background:#2b4fb8"></div><div class="abs" style="left:53px;top:447px;width:1px;height:5px;background:#2b4fb8"></div><span class="t tr" style="left:71px;top:444px">LOX_VI_POWER</span><span class="t tr" style="left:369px;top:444px">array</span><div class="abs" style="left:54px;top:454px;width:1px;height:10px;background:repeating-linear-gradient(180deg,#a0a0a0 0 1px,transparent 1px 2px)"></div><div class="abs" style="left:59px;top:467px;width:5px;height:1px;background:repeating-linear-gradient(90deg,#a0a0a0 0 1px,transparent 1px 2px)"></div><div class="abs" style="left:49px;top:463px;width:9px;height:9px;border:1px solid #919191;border-radius:1px;background:linear-gradient(135deg,#fff,#e0e0e0)"></div><div class="abs" style="left:51px;top:467px;width:5px;height:1px;background:#2b4fb8"></div><div class="abs" style="left:53px;top:465px;width:1px;height:5px;background:#2b4fb8"></div><span class="t tr" style="left:71px;top:462px">LOX_VI_VOLUME</span><span class="t tr" style="left:369px;top:462px">array</span><div class="abs" style="left:54px;top:472px;width:1px;height:10px;background:repeating-linear-gradient(180deg,#a0a0a0 0 1px,transparent 1px 2px)"></div><div class="abs" style="left:59px;top:485px;width:5px;height:1px;background:repeating-linear-gradient(90deg,#a0a0a0 0 1px,transparent 1px 2px)"></div><div class="abs" style="left:49px;top:481px;width:9px;height:9px;border:1px solid #919191;border-radius:1px;background:linear-gradient(135deg,#fff,#e0e0e0)"></div><div class="abs" style="left:51px;top:485px;width:5px;height:1px;background:#2b4fb8"></div><div class="abs" style="left:53px;top:483px;width:1px;height:5px;background:#2b4fb8"></div><span class="t tr" style="left:71px;top:480px">LOX_VTI_MODE</span><span class="t tr" style="left:369px;top:480px">array</span><div class="abs" style="left:54px;top:490px;width:1px;height:10px;background:repeating-linear-gradient(180deg,#a0a0a0 0 1px,transparent 1px 2px)"></div><div class="abs" style="left:59px;top:503px;width:5px;height:1px;background:repeating-linear-gradient(90deg,#a0a0a0 0 1px,transparent 1px 2px)"></div><div class="abs" style="left:49px;top:499px;width:9px;height:9px;border:1px solid #919191;border-radius:1px;background:linear-gradient(135deg,#fff,#e0e0e0)"></div><div class="abs" style="left:51px;top:503px;width:5px;height:1px;background:#2b4fb8"></div><div class="abs" style="left:53px;top:501px;width:1px;height:5px;background:#2b4fb8"></div><span class="t tr" style="left:71px;top:498px">LOX_VTI_SYNC</span><span class="t tr" style="left:369px;top:498px">array</span><div class="abs" style="left:54px;top:508px;width:1px;height:10px;background:repeating-linear-gradient(180deg,#a0a0a0 0 1px,transparent 1px 2px)"></div><div class="abs" style="left:59px;top:521px;width:5px;height:1px;background:repeating-linear-gradient(90deg,#a0a0a0 0 1px,transparent 1px 2px)"></div><div class="abs" style="left:49px;top:517px;width:9px;height:9px;border:1px solid #919191;border-radius:1px;background:linear-gradient(135deg,#fff,#e0e0e0)"></div><div class="abs" style="left:51px;top:521px;width:5px;height:1px;background:#2b4fb8"></div><div class="abs" style="left:53px;top:519px;width:1px;height:5px;background:#2b4fb8"></div><span class="t tr" style="left:71px;top:516px">LOX_VTI_TIME</span><span class="t tr" style="left:369px;top:516px">array</span><div class="abs" style="left:54px;top:526px;width:1px;height:10px;background:repeating-linear-gradient(180deg,#a0a0a0 0 1px,transparent 1px 2px)"></div><div class="abs" style="left:59px;top:539px;width:5px;height:1px;background:repeating-linear-gradient(90deg,#a0a0a0 0 1px,transparent 1px 2px)"></div><div class="abs" style="left:49px;top:535px;width:9px;height:9px;border:1px solid #919191;border-radius:1px;background:linear-gradient(135deg,#fff,#e0e0e0)"></div><div class="abs" style="left:51px;top:539px;width:5px;height:1px;background:#2b4fb8"></div><div class="abs" style="left:53px;top:537px;width:1px;height:5px;background:#2b4fb8"></div><span class="t tr" style="left:71px;top:534px">LOX_VTI_TITLE</span><span class="t tr" style="left:369px;top:534px">array</span><div class="abs" style="left:54px;top:544px;width:1px;height:10px;background:repeating-linear-gradient(180deg,#a0a0a0 0 1px,transparent 1px 2px)"></div><div class="abs" style="left:59px;top:557px;width:5px;height:1px;background:repeating-linear-gradient(90deg,#a0a0a0 0 1px,transparent 1px 2px)"></div><div class="abs" style="left:49px;top:553px;width:9px;height:9px;border:1px solid #919191;border-radius:1px;background:linear-gradient(135deg,#fff,#e0e0e0)"></div><div class="abs" style="left:51px;top:557px;width:5px;height:1px;background:#2b4fb8"></div><div class="abs" style="left:53px;top:555px;width:1px;height:5px;background:#2b4fb8"></div><span class="t tr" style="left:71px;top:552px">LOX_VTI_TITLE_TIME</span><span class="t tr" style="left:369px;top:552px">array</span><div class="abs" style="left:54px;top:562px;width:1px;height:10px;background:repeating-linear-gradient(180deg,#a0a0a0 0 1px,transparent 1px 2px)"></div><div class="abs" style="left:59px;top:575px;width:5px;height:1px;background:repeating-linear-gradient(90deg,#a0a0a0 0 1px,transparent 1px 2px)"></div><div class="abs" style="left:49px;top:571px;width:9px;height:9px;border:1px solid #919191;border-radius:1px;background:linear-gradient(135deg,#fff,#e0e0e0)"></div><div class="abs" style="left:51px;top:575px;width:5px;height:1px;background:#2b4fb8"></div><div class="abs" style="left:53px;top:573px;width:1px;height:5px;background:#2b4fb8"></div><span class="t tr" style="left:71px;top:570px">SLM_ALSA_PARAMS</span><span class="t tr" style="left:369px;top:570px">array</span><div class="abs" style="left:54px;top:580px;width:1px;height:10px;background:repeating-linear-gradient(180deg,#a0a0a0 0 1px,transparent 1px 2px)"></div><div class="abs" style="left:59px;top:593px;width:5px;height:1px;background:repeating-linear-gradient(90deg,#a0a0a0 0 1px,transparent 1px 2px)"></div><div class="abs" style="left:49px;top:589px;width:9px;height:9px;border:1px solid #919191;border-radius:1px;background:linear-gradient(135deg,#fff,#e0e0e0)"></div><div class="abs" style="left:51px;top:593px;width:5px;height:1px;background:#2b4fb8"></div><div class="abs" style="left:53px;top:591px;width:1px;height:5px;background:#2b4fb8"></div><span class="t tr" style="left:71px;top:588px">SLM_AUTOSTART</span><span class="t tr" style="left:369px;top:588px">array</span><div class="abs" style="left:54px;top:598px;width:1px;height:10px;background:repeating-linear-gradient(180deg,#a0a0a0 0 1px,transparent 1px 2px)"></div><div class="abs" style="left:59px;top:611px;width:5px;height:1px;background:repeating-linear-gradient(90deg,#a0a0a0 0 1px,transparent 1px 2px)"></div><div class="abs" style="left:49px;top:607px;width:9px;height:9px;border:1px solid #919191;border-radius:1px;background:linear-gradient(135deg,#fff,#e0e0e0)"></div><div class="abs" style="left:51px;top:611px;width:5px;height:1px;background:#2b4fb8"></div><span class="t tr" style="left:71px;top:606px">SLM_MAC_ADDRESS</span><span class="t tr" style="left:369px;top:606px">array</span><div class="abs" style="left:72px;top:620px;width:1px;height:10px;background:repeating-linear-gradient(180deg,#a0a0a0 0 1px,transparent 1px 2px)"></div><div class="abs" style="left:73px;top:629px;width:9px;height:1px;background:repeating-linear-gradient(90deg,#a0a0a0 0 1px,transparent 1px 2px)"></div><span class="t tr" style="left:89px;top:624px">4</span><span class="t tr" style="left:219px;top:624px">aa:bb:cc:dd:ee:04</span><span class="t tr" style="left:369px;top:624px">string</span><div class="abs" style="left:54px;top:616px;width:1px;height:28px;background:repeating-linear-gradient(180deg,#a0a0a0 0 1px,transparent 1px 2px)"></div><div class="abs" style="left:59px;top:647px;width:5px;height:1px;background:repeating-linear-gradient(90deg,#a0a0a0 0 1px,transparent 1px 2px)"></div><div class="abs" style="left:49px;top:643px;width:9px;height:9px;border:1px solid #919191;border-radius:1px;background:linear-gradient(135deg,#fff,#e0e0e0)"></div><div class="abs" style="left:51px;top:647px;width:5px;height:1px;background:#2b4fb8"></div><div class="abs" style="left:53px;top:645px;width:1px;height:5px;background:#2b4fb8"></div><span class="t tr" style="left:71px;top:642px">SLM_NAME</span><span class="t tr" style="left:369px;top:642px">array</span><div class="abs" style="left:54px;top:652px;width:1px;height:10px;background:repeating-linear-gradient(180deg,#a0a0a0 0 1px,transparent 1px 2px)"></div><div class="abs" style="left:59px;top:665px;width:5px;height:1px;background:repeating-linear-gradient(90deg,#a0a0a0 0 1px,transparent 1px 2px)"></div><div class="abs" style="left:49px;top:661px;width:9px;height:9px;border:1px solid #919191;border-radius:1px;background:linear-gradient(135deg,#fff,#e0e0e0)"></div><div class="abs" style="left:51px;top:665px;width:5px;height:1px;background:#2b4fb8"></div><div class="abs" style="left:53px;top:663px;width:1px;height:5px;background:#2b4fb8"></div><span class="t tr" style="left:71px;top:660px">SLM_SOUNDCARD</span><span class="t tr" style="left:369px;top:660px">array</span><div class="abs" style="left:54px;top:670px;width:1px;height:10px;background:repeating-linear-gradient(180deg,#a0a0a0 0 1px,transparent 1px 2px)"></div><div class="abs" style="left:59px;top:683px;width:5px;height:1px;background:repeating-linear-gradient(90deg,#a0a0a0 0 1px,transparent 1px 2px)"></div><div class="abs" style="left:49px;top:679px;width:9px;height:9px;border:1px solid #919191;border-radius:1px;background:linear-gradient(135deg,#fff,#e0e0e0)"></div><div class="abs" style="left:51px;top:683px;width:5px;height:1px;background:#2b4fb8"></div><div class="abs" style="left:53px;top:681px;width:1px;height:5px;background:#2b4fb8"></div><span class="t tr" style="left:71px;top:678px">SQ2LOX_DATEN</span><span class="t tr" style="left:369px;top:678px">array</span><div class="abs" style="left:36px;top:418px;width:1px;height:280px;background:repeating-linear-gradient(180deg,#a0a0a0 0 1px,transparent 1px 2px)"></div><div class="abs" style="left:41px;top:701px;width:5px;height:1px;background:repeating-linear-gradient(90deg,#a0a0a0 0 1px,transparent 1px 2px)"></div><div class="abs" style="left:31px;top:697px;width:9px;height:9px;border:1px solid #919191;border-radius:1px;background:linear-gradient(135deg,#fff,#e0e0e0)"></div><div class="abs" style="left:33px;top:701px;width:5px;height:1px;background:#2b4fb8"></div><div class="abs" style="left:35px;top:699px;width:1px;height:5px;background:#2b4fb8"></div><span class="t tr" style="left:54px;top:696px">5</span><span class="t tr" style="left:369px;top:696px">array</span><div class="abs" style="left:36px;top:706px;width:1px;height:10px;background:repeating-linear-gradient(180deg,#a0a0a0 0 1px,transparent 1px 2px)"></div><div class="abs" style="left:41px;top:719px;width:5px;height:1px;background:repeating-linear-gradient(90deg,#a0a0a0 0 1px,transparent 1px 2px)"></div><div class="abs" style="left:31px;top:715px;width:9px;height:9px;border:1px solid #919191;border-radius:1px;background:linear-gradient(135deg,#fff,#e0e0e0)"></div><div class="abs" style="left:33px;top:719px;width:5px;height:1px;background:#2b4fb8"></div><div class="abs" style="left:35px;top:717px;width:1px;height:5px;background:#2b4fb8"></div><span class="t tr" style="left:54px;top:714px">6</span><span class="t tr" style="left:369px;top:714px">array</span><div class="abs" style="left:18px;top:58px;width:1px;height:680px;background:repeating-linear-gradient(180deg,#a0a0a0 0 1px,transparent 1px 2px)"></div><div class="abs" style="left:19px;top:737px;width:9px;height:1px;background:repeating-linear-gradient(90deg,#a0a0a0 0 1px,transparent 1px 2px)"></div><span class="t tr" style="left:36px;top:732px">$i</span><span class="t tr" style="left:219px;top:732px">0</span><span class="t tr" style="left:369px;top:732px">int</span><div class="abs" style="left:18px;top:737px;width:1px;height:15px;background:repeating-linear-gradient(180deg,#a0a0a0 0 1px,transparent 1px 2px)"></div><div class="abs" style="left:23px;top:755px;width:5px;height:1px;background:repeating-linear-gradient(90deg,#a0a0a0 0 1px,transparent 1px 2px)"></div><div class="abs" style="left:13px;top:751px;width:9px;height:9px;border:1px solid #919191;border-radius:1px;background:linear-gradient(135deg,#fff,#e0e0e0)"></div><div class="abs" style="left:15px;top:755px;width:5px;height:1px;background:#2b4fb8"></div><span class="t tr" style="left:36px;top:750px">$zones_int_array</span><span class="t tr" style="left:369px;top:750px">array</span><div class="abs" style="left:36px;top:764px;width:1px;height:10px;background:repeating-linear-gradient(180deg,#a0a0a0 0 1px,transparent 1px 2px)"></div><div class="abs" style="left:37px;top:773px;width:9px;height:1px;background:repeating-linear-gradient(90deg,#a0a0a0 0 1px,transparent 1px 2px)"></div><span class="t tr" style="left:54px;top:768px">0</span><span class="t tr" style="left:219px;top:768px">aa:bb:cc:dd:ee:01</span><span class="t tr" style="left:369px;top:768px">string</span><div class="abs" style="left:18px;top:760px;width:1px;height:28px;background:repeating-linear-gradient(180deg,#a0a0a0 0 1px,transparent 1px 2px)"></div><div class="abs" style="left:23px;top:791px;width:5px;height:1px;background:repeating-linear-gradient(90deg,#a0a0a0 0 1px,transparent 1px 2px)"></div><div class="abs" style="left:13px;top:787px;width:9px;height:9px;border:1px solid #919191;border-radius:1px;background:linear-gradient(135deg,#fff,#e0e0e0)"></div><div class="abs" style="left:15px;top:791px;width:5px;height:1px;background:#2b4fb8"></div><span class="t tr" style="left:36px;top:786px">$zones_mac_array</span><span class="t tr" style="left:369px;top:786px">array</span><div class="abs" style="left:36px;top:800px;width:1px;height:10px;background:repeating-linear-gradient(180deg,#a0a0a0 0 1px,transparent 1px 2px)"></div><div class="abs" style="left:37px;top:809px;width:9px;height:1px;background:repeating-linear-gradient(90deg,#a0a0a0 0 1px,transparent 1px 2px)"></div><span class="t tr" style="left:54px;top:804px">0</span><span class="t tr" style="left:219px;top:804px">aa:bb:cc:dd:ee:04</span><span class="t tr" style="left:369px;top:804px">string</span><div class="abs" style="left:7px;top:830px;width:476px;height:1px;background:#000"></div><div class="abs" style="left:7px;top:831px;width:476px;height:1px;background:#fff"></div><span class="t" style="left:38px;top:834px;font-size:11px;color:#555">Local context</span><div class="abs" style="left:107px;top:833px;width:1px;height:14px;background:#333"></div><span class="t" style="left:136px;top:834px;font-size:11px;color:#555">Global context</span><div class="abs" style="left:212px;top:829px;width:75px;height:21px;background:#f0f0f0;border:1px solid #000;border-top:none;border-left:none"></div><span class="t" style="left:238px;top:834px;font-size:11px;color:#000">Watches</span></div>
</div>
</body></html>
